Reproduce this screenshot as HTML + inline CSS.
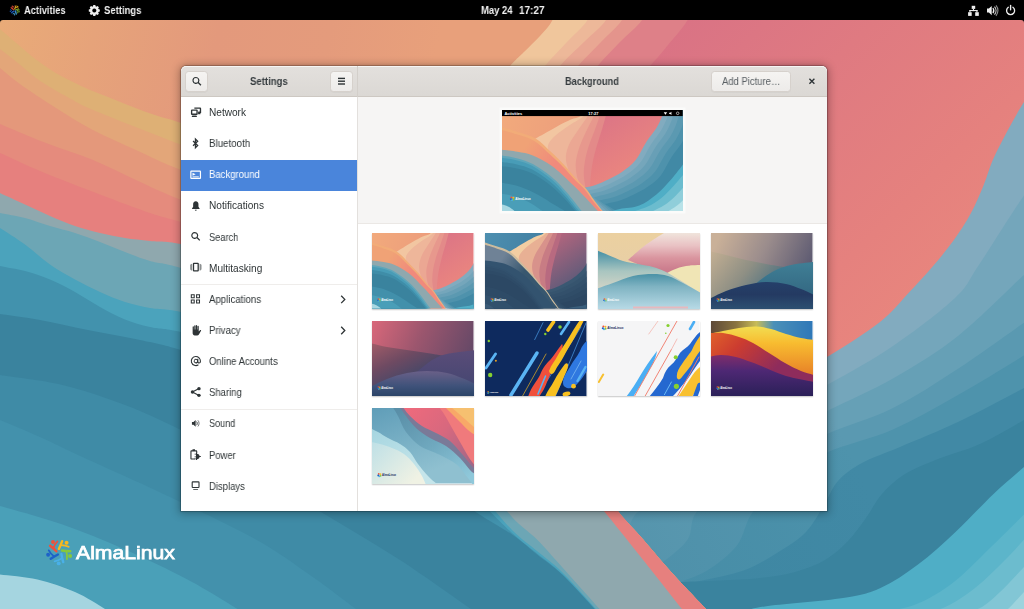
<!DOCTYPE html><html><head><meta charset="utf-8"><title>Settings - Background</title><style>

html,body{margin:0;padding:0;}
body{width:1024px;height:609px;overflow:hidden;position:relative;background:#3a839e;font-family:"Liberation Sans", "DejaVu Sans", sans-serif;}
#wall{position:absolute;left:0;top:0;width:1024px;height:609px;}
.t{position:absolute;white-space:nowrap;transform-origin:0 50%;line-height:normal;display:inline-block;will-change:transform;}
#topbar{position:absolute;left:0;top:0;width:1024px;height:20.2px;background:#000;}
#cornerl,#cornerr{position:absolute;top:20px;width:3px;height:3px;}
#win{position:absolute;left:181px;top:66.3px;width:646px;height:444.8px;border-radius:5px 5px 0 0;background:#fff;
 box-shadow:0 0 0 0.8px rgba(0,0,0,0.22),0 1px 9px 2px rgba(0,0,0,0.27),0 0 3px rgba(0,0,0,0.22);overflow:hidden;}
#hdr{position:absolute;left:0;top:0;width:646px;height:30px;background:linear-gradient(#e3e0dd,#dbd8d4);border-bottom:1px solid #cdc8c2;border-radius:5px 5px 0 0;box-shadow:inset 0 1px rgba(255,255,255,0.7);}
#hsep{position:absolute;left:176px;top:0;width:1px;height:31px;background:#d3cfca;}
.btn{position:absolute;background:linear-gradient(#f5f4f2,#edebe9);border:0.7px solid #d6d1cc;border-radius:3.5px;box-sizing:border-box;box-shadow:0 0.5px 0.5px rgba(0,0,0,0.06);}
#side{position:absolute;left:0;top:31px;width:176px;height:414px;background:#fff;border-right:1px solid #e3e0dd;}
#content{position:absolute;left:177px;top:31px;width:469px;height:414px;background:#fff;}
#prevarea{position:absolute;left:0;top:0;width:469px;height:125.3px;background:#f6f5f4;border-bottom:1px solid #ebe8e5;}
.alma{-webkit-text-stroke:0.75px #fff;}
.sel{position:absolute;left:0;width:176px;background:#4a85db;}
.sep{position:absolute;left:0;width:176px;height:1px;background:#efedeb;}
.thumb{position:absolute;width:101.5px;height:75.5px;overflow:hidden;box-shadow:0 0.5px 1.2px rgba(0,0,0,0.22);}
.thumb svg{display:block;width:101.5px;height:75.5px;}
svg{overflow:hidden}

</style></head><body>
<svg id="wall" viewBox="0 0 1024 609" preserveAspectRatio="none">
<defs>
<linearGradient id="gpink" gradientUnits="userSpaceOnUse" x1="660" y1="20" x2="960" y2="330">
<stop offset="0" stop-color="#D97285"/><stop offset="0.35" stop-color="#DF7A81"/><stop offset="0.7" stop-color="#E5817E"/><stop offset="1" stop-color="#EA887D"/></linearGradient>
<linearGradient id="gor" gradientUnits="userSpaceOnUse" x1="0" y1="20" x2="420" y2="120">
<stop offset="0" stop-color="#E9AB78"/><stop offset="0.22" stop-color="#E6A37A"/><stop offset="0.5" stop-color="#E3997C"/><stop offset="0.75" stop-color="#E49B7C"/><stop offset="1" stop-color="#E8A07B"/></linearGradient>
</defs>
<rect x="0" y="0" width="1024" height="609" fill="url(#gpink)"/>
<path d="M692.0 0.0C691.2 3.3 691.5 12.5 687.5 20.0C683.5 27.5 674.2 37.3 668.0 45.0C661.8 52.7 661.3 53.5 650.0 66.0C638.7 78.5 615.0 101.0 600.0 120.0C585.0 139.0 570.0 156.7 560.0 180.0C550.0 203.3 543.3 246.7 540.0 260.0L0.0 400.0L0.0 0.0Z" fill="#DE8088"/>
<path d="M648.0 0.0C647.0 3.3 646.7 13.0 642.0 20.0C637.3 27.0 627.4 34.3 620.0 42.0C612.6 49.7 607.5 54.7 597.5 66.0C587.5 77.3 572.9 92.7 560.0 110.0C547.1 127.3 530.0 145.0 520.0 170.0C510.0 195.0 503.3 245.0 500.0 260.0L0.0 400.0L0.0 0.0Z" fill="#E4948C"/>
<path d="M628.0 0.0C627.0 3.3 626.5 13.0 622.0 20.0C617.5 27.0 608.3 34.3 601.0 42.0C593.7 49.7 588.2 54.7 578.0 66.0C567.8 77.3 552.2 92.7 540.0 110.0C527.8 127.3 514.2 145.0 505.0 170.0C495.8 195.0 488.3 245.0 485.0 260.0L0.0 400.0L0.0 0.0Z" fill="#E9A793"/>
<path d="M611.0 0.0C610.2 3.3 610.5 13.0 606.0 20.0C601.5 27.0 591.7 34.3 584.0 42.0C576.3 49.7 569.8 54.7 560.0 66.0C550.2 77.3 536.7 92.7 525.0 110.0C513.3 127.3 499.2 145.0 490.0 170.0C480.8 195.0 473.3 245.0 470.0 260.0L0.0 400.0L0.0 0.0Z" fill="#EDB899"/>
<path d="M592.0 0.0C591.2 3.3 591.7 13.0 587.5 20.0C583.3 27.0 574.1 34.3 567.0 42.0C559.9 49.7 554.5 54.7 545.0 66.0C535.5 77.3 522.5 92.7 510.0 110.0C497.5 127.3 480.0 145.0 470.0 170.0C460.0 195.0 453.3 245.0 450.0 260.0L0.0 400.0L0.0 0.0Z" fill="#F0C69C"/>
<path d="M557.0 0.0C556.2 3.3 555.3 14.0 552.5 20.0C549.7 26.0 544.8 30.7 540.0 36.0C535.2 41.3 529.0 47.0 524.0 52.0C519.0 57.0 519.0 56.3 510.0 66.0C501.0 75.7 483.3 92.7 470.0 110.0C456.7 127.3 440.0 145.0 430.0 170.0C420.0 195.0 413.3 245.0 410.0 260.0L0.0 400.0L0.0 0.0Z" fill="url(#gor)"/>
<path d="M1040.0 85.0C1037.3 87.8 1031.3 90.7 1024.0 102.0C1016.7 113.3 1002.8 139.1 996.0 153.0C989.2 166.9 987.7 175.5 983.5 185.5C979.3 195.5 976.0 203.8 971.0 213.0C966.0 222.2 959.8 231.8 953.5 240.5C947.2 249.2 941.0 256.8 933.5 265.5C926.0 274.2 917.4 283.6 908.5 293.0C899.6 302.4 893.6 311.3 880.0 322.0C866.4 332.7 847.0 344.8 827.0 357.0C807.0 369.2 782.8 381.2 760.0 395.0C737.2 408.8 711.7 425.0 690.0 440.0C668.3 455.0 643.3 473.3 630.0 485.0C616.7 496.7 613.3 505.8 610.0 510.0L706.0 609.0L1040.0 609.0Z" fill="#82ABBF"/>
<path d="M1040.0 180.0C1037.3 182.6 1034.2 181.2 1024.0 195.5C1013.8 209.8 990.0 248.4 978.5 265.5C967.0 282.6 969.2 284.6 955.0 298.0C940.8 311.4 914.3 331.5 893.0 346.0C871.7 360.5 852.5 370.7 827.0 385.0C801.5 399.3 766.2 416.5 740.0 432.0C713.8 447.5 689.2 465.8 670.0 478.0C650.8 490.2 635.8 498.0 625.0 505.0C614.2 512.0 608.3 517.5 605.0 520.0L600.0 640.0L1040.0 640.0Z" fill="#74A6BB"/>
<path d="M1040.0 262.0C1037.3 264.2 1037.7 262.7 1024.0 275.0C1010.3 287.3 979.8 318.8 958.0 336.0C936.2 353.2 914.8 366.0 893.0 378.5C871.2 391.0 849.2 399.9 827.0 411.0C804.8 422.1 781.2 433.5 760.0 445.0C738.8 456.5 716.7 470.5 700.0 480.0C683.3 489.5 670.3 496.7 660.0 502.0C649.7 507.3 643.2 507.8 638.0 512.0C632.8 516.2 631.3 521.5 629.0 527.0C626.7 532.5 624.8 542.0 624.0 545.0L600.0 640.0L1040.0 640.0Z" fill="#66A0B6"/>
<path d="M1040.0 312.0C1037.3 313.8 1037.7 313.2 1024.0 322.7C1010.3 332.1 979.8 354.5 958.0 368.7C936.2 382.9 914.8 397.1 893.0 408.0C871.2 418.9 846.7 425.0 827.0 434.0C807.3 443.0 791.2 452.7 775.0 462.0C758.8 471.3 743.1 481.7 730.0 490.0C716.9 498.3 703.6 503.8 696.6 512.0C689.6 520.2 692.9 531.2 688.0 539.0C683.1 546.8 673.7 553.5 667.0 559.0C660.3 564.5 651.2 569.8 648.0 572.0L600.0 640.0L1040.0 640.0Z" fill="#5A99B1"/>
<path d="M1040.0 345.0C1037.3 346.8 1037.7 347.2 1024.0 355.5C1010.3 363.8 979.8 382.7 958.0 395.0C936.2 407.3 914.8 419.8 893.0 429.4C871.2 439.0 845.0 444.3 827.0 452.4C809.0 460.5 797.4 468.1 785.0 478.0C772.6 487.9 760.7 500.8 752.7 512.0C744.7 523.2 744.5 535.7 737.0 545.4C729.5 555.1 717.0 564.1 708.0 570.0C699.0 575.9 689.3 578.3 683.0 581.0C676.7 583.7 672.2 585.2 670.0 586.0L600.0 640.0L1040.0 640.0Z" fill="#4E93AC"/>
<path d="M1040.0 378.0C1037.3 379.7 1037.7 380.7 1024.0 388.0C1010.3 395.3 978.7 412.2 958.0 422.0C937.3 431.8 916.0 440.2 900.0 447.0C884.0 453.8 872.3 457.3 862.0 463.0C851.7 468.7 844.3 474.0 838.0 481.0C831.7 488.0 829.3 496.5 824.0 505.0C818.7 513.5 813.3 524.3 806.0 532.0C798.7 539.7 790.2 544.7 780.0 551.0C769.8 557.3 758.3 565.0 745.0 570.0C731.7 575.0 710.8 578.8 700.0 581.0C689.2 583.2 683.3 582.7 680.0 583.0L600.0 640.0L1040.0 640.0Z" fill="#4189A5"/>
<path d="M1040.0 410.0C1037.3 411.7 1034.0 414.3 1024.0 420.0C1014.0 425.7 994.3 437.5 980.0 444.0C965.7 450.5 950.5 454.0 938.0 459.0C925.5 464.0 914.3 468.2 905.0 474.0C895.7 479.8 888.5 486.7 882.0 494.0C875.5 501.3 871.7 510.2 866.0 518.0C860.3 525.8 854.8 534.0 848.0 541.0C841.2 548.0 833.8 554.8 825.0 560.0C816.2 565.2 805.8 569.0 795.0 572.0C784.2 575.0 772.5 576.6 760.0 578.0C747.5 579.4 733.3 579.8 720.0 580.5C706.7 581.2 686.7 581.8 680.0 582.0L600.0 640.0L1040.0 640.0Z" fill="#3A839E"/>
<linearGradient id="gdk" gradientUnits="userSpaceOnUse" x1="620" y1="565" x2="850" y2="450"><stop offset="0" stop-color="#3A839E" stop-opacity="0.42"/><stop offset="0.6" stop-color="#3A839E" stop-opacity="0.22"/><stop offset="1" stop-color="#3A839E" stop-opacity="0"/></linearGradient>
<path d="M1040.0 85.0C1037.3 87.8 1031.3 90.7 1024.0 102.0C1016.7 113.3 1002.8 139.1 996.0 153.0C989.2 166.9 987.7 175.5 983.5 185.5C979.3 195.5 976.0 203.8 971.0 213.0C966.0 222.2 959.8 231.8 953.5 240.5C947.2 249.2 941.0 256.8 933.5 265.5C926.0 274.2 917.4 283.6 908.5 293.0C899.6 302.4 893.6 311.3 880.0 322.0C866.4 332.7 847.0 344.8 827.0 357.0C807.0 369.2 782.8 381.2 760.0 395.0C737.2 408.8 711.7 425.0 690.0 440.0C668.3 455.0 643.3 473.3 630.0 485.0C616.7 496.7 613.3 505.8 610.0 510.0L706.0 609.0L1040.0 609.0Z" fill="url(#gdk)"/>
<path d="M740.0 612.0C744.7 611.0 750.8 608.3 768.0 606.0C785.2 603.7 824.2 601.0 843.0 598.0C861.8 595.0 868.0 593.6 880.5 588.0C893.0 582.4 905.5 573.8 918.0 564.5C930.5 555.2 943.0 543.7 955.5 532.0C968.0 520.3 981.6 505.3 993.0 494.5C1004.4 483.7 1016.2 474.1 1024.0 467.0C1031.8 459.9 1037.3 454.5 1040.0 452.0L1040.0 614.0Z" fill="#4FAEC6"/>
<path d="M860.0 612.0C868.0 611.2 893.0 611.5 908.0 607.0C923.0 602.5 936.3 594.8 950.0 585.0C963.7 575.2 977.7 559.8 990.0 548.0C1002.3 536.2 1015.7 522.8 1024.0 514.5C1032.3 506.2 1037.3 500.8 1040.0 498.0L1040.0 614.0Z" fill="#5CB5CA"/>
<path d="M915.0 612.0C919.7 611.3 933.0 612.0 943.0 608.0C953.0 604.0 964.7 596.0 975.0 588.0C985.3 580.0 996.8 568.1 1005.0 560.0C1013.2 551.9 1018.2 545.8 1024.0 539.5C1029.8 533.2 1037.3 524.9 1040.0 522.0L1040.0 614.0Z" fill="#6CBCCE"/>
<path d="M960.0 612.0C963.3 611.3 973.3 611.3 980.0 608.0C986.7 604.7 992.7 598.8 1000.0 592.0C1007.3 585.2 1017.3 574.0 1024.0 567.0C1030.7 560.0 1037.3 552.8 1040.0 550.0L1040.0 614.0Z" fill="#82C6D5"/>
<path d="M1000.0 613.0C1001.3 612.3 1004.0 612.5 1008.0 609.0C1012.0 605.5 1018.7 597.7 1024.0 592.0C1029.3 586.3 1037.3 577.8 1040.0 575.0L1040.0 614.0Z" fill="#9DD3DD"/>
<path d="M-10.0 20.0C-8.3 21.5 -4.7 24.9 0.0 29.0C4.7 33.1 12.0 39.4 18.0 44.5C24.0 49.6 30.0 54.9 36.0 59.5C42.0 64.1 48.0 68.3 54.0 72.0C60.0 75.7 66.0 78.5 72.0 81.5C78.0 84.5 84.0 87.4 90.0 90.0C96.0 92.6 101.9 94.6 108.0 97.0C114.1 99.4 120.4 102.1 126.5 104.5C132.6 106.9 138.5 109.3 144.5 111.5C150.5 113.7 156.4 115.6 162.5 117.5C168.6 119.4 164.8 117.2 181.0 123.0C197.2 128.8 230.2 136.7 260.0 152.0C289.8 167.3 328.3 192.0 360.0 215.0C391.7 238.0 421.7 262.5 450.0 290.0C478.3 317.5 506.7 350.8 530.0 380.0C553.3 409.2 575.5 443.3 590.0 465.0C604.5 486.7 608.7 498.2 617.0 510.0C625.3 521.8 630.8 525.5 640.0 536.0C649.2 546.5 661.0 560.8 672.0 573.0C683.0 585.2 699.3 601.8 706.0 609.0C712.7 616.2 711.0 614.8 712.0 616.0L-10.0 618.0Z" fill="#DEB075"/>
<path d="M-10.0 40.0C-8.3 41.5 -4.7 45.2 0.0 49.0C4.7 52.8 12.0 58.2 18.0 63.0C24.0 67.8 30.0 73.6 36.0 78.0C42.0 82.4 48.0 85.9 54.0 89.5C60.0 93.1 66.8 96.7 72.0 99.5C77.2 102.3 79.0 103.8 85.0 106.5C91.0 109.2 101.1 113.2 108.0 116.0C114.9 118.8 120.4 121.1 126.5 123.5C132.6 125.9 138.5 128.2 144.5 130.5C150.5 132.8 156.4 135.2 162.5 137.5C168.6 139.8 164.8 138.8 181.0 144.5C197.2 150.2 230.2 158.1 260.0 172.0C289.8 185.9 328.3 206.7 360.0 228.0C391.7 249.3 421.7 273.3 450.0 300.0C478.3 326.7 506.7 360.0 530.0 388.0C553.3 416.0 575.5 447.7 590.0 468.0C604.5 488.3 608.7 498.7 617.0 510.0C625.3 521.3 630.8 525.5 640.0 536.0C649.2 546.5 661.0 560.8 672.0 573.0C683.0 585.2 699.3 601.8 706.0 609.0C712.7 616.2 711.0 614.8 712.0 616.0L-10.0 618.0Z" fill="#E3A679"/>
<path d="M-10.0 60.0C-8.3 61.3 -5.0 64.0 0.0 68.0C5.0 72.0 10.7 77.3 20.0 84.0C29.3 90.7 44.0 100.4 56.0 108.0C68.0 115.6 78.7 122.5 92.0 129.5C105.3 136.5 121.2 143.2 136.0 150.0C150.8 156.8 160.3 162.0 181.0 170.0C201.7 178.0 230.2 185.3 260.0 198.0C289.8 210.7 328.3 226.7 360.0 246.0C391.7 265.3 421.7 288.8 450.0 314.0C478.3 339.2 506.7 371.0 530.0 397.0C553.3 423.0 575.5 451.2 590.0 470.0C604.5 488.8 608.7 499.0 617.0 510.0C625.3 521.0 630.8 525.5 640.0 536.0C649.2 546.5 661.0 560.8 672.0 573.0C683.0 585.2 699.3 601.8 706.0 609.0C712.7 616.2 711.0 614.8 712.0 616.0L-10.0 618.0Z" fill="#E4987B"/>
<path d="M-10.0 120.0C-8.3 120.7 -9.3 120.2 0.0 124.0C9.3 127.8 30.7 137.1 46.0 143.0C61.3 148.9 77.0 153.3 92.0 159.5C107.0 165.7 121.2 173.3 136.0 180.0C150.8 186.7 160.3 192.0 181.0 199.7C201.7 207.4 230.2 214.3 260.0 226.0C289.8 237.7 328.3 252.5 360.0 270.0C391.7 287.5 421.7 308.3 450.0 331.0C478.3 353.7 506.7 382.3 530.0 406.0C553.3 429.7 575.5 455.7 590.0 473.0C604.5 490.3 608.7 499.5 617.0 510.0C625.3 520.5 630.8 525.5 640.0 536.0C649.2 546.5 661.0 560.8 672.0 573.0C683.0 585.2 699.3 601.8 706.0 609.0C712.7 616.2 711.0 614.8 712.0 616.0L-10.0 618.0Z" fill="#E58B7D"/>
<path d="M-10.0 149.0C-8.3 149.7 -8.8 149.2 0.0 153.0C8.8 156.8 25.8 165.1 42.5 172.0C59.2 178.9 82.1 187.7 100.0 194.5C117.9 201.3 136.5 208.4 150.0 213.0C163.5 217.6 162.7 216.7 181.0 222.0C199.3 227.3 230.2 234.5 260.0 245.0C289.8 255.5 328.3 268.8 360.0 285.0C391.7 301.2 421.7 320.8 450.0 342.0C478.3 363.2 506.7 389.8 530.0 412.0C553.3 434.2 575.5 458.7 590.0 475.0C604.5 491.3 608.7 499.8 617.0 510.0C625.3 520.2 630.8 525.5 640.0 536.0C649.2 546.5 661.0 560.8 672.0 573.0C683.0 585.2 699.3 601.8 706.0 609.0C712.7 616.2 711.0 614.8 712.0 616.0L-10.0 618.0Z" fill="#E6807E"/>
<path d="M-10.0 188.0C-8.3 188.8 -5.8 190.2 0.0 193.0C5.8 195.8 16.7 200.7 25.0 204.5C33.3 208.3 41.7 212.4 50.0 216.0C58.3 219.6 66.7 223.2 75.0 226.0C83.3 228.8 91.7 231.0 100.0 233.0C108.3 235.0 116.7 236.7 125.0 238.0C133.3 239.3 140.7 240.0 150.0 241.0C159.3 242.0 162.7 240.5 181.0 244.0C199.3 247.5 230.2 252.7 260.0 262.0C289.8 271.3 328.3 284.5 360.0 300.0C391.7 315.5 421.7 334.2 450.0 355.0C478.3 375.8 508.3 403.3 530.0 425.0C551.7 446.7 567.8 470.8 580.0 485.0C592.2 499.2 593.0 498.2 603.0 510.0C613.0 521.8 626.8 539.5 640.0 556.0C653.2 572.5 673.7 598.7 682.0 609.0C690.3 619.3 688.7 616.5 690.0 618.0L-10.0 618.0Z" fill="#8FA8AE"/>
<path d="M-10.0 210.0C-8.3 210.5 -5.8 211.7 0.0 213.0C5.8 214.3 16.7 215.8 25.0 218.0C33.3 220.2 41.7 223.5 50.0 226.0C58.3 228.5 66.7 230.3 75.0 233.0C83.3 235.7 91.7 238.8 100.0 242.0C108.3 245.2 116.7 248.8 125.0 252.0C133.3 255.2 140.7 258.3 150.0 261.0C159.3 263.7 162.7 262.3 181.0 268.0C199.3 273.7 233.5 283.8 260.0 295.0C286.5 306.2 313.3 317.2 340.0 335.0C366.7 352.8 396.7 378.5 420.0 402.0C443.3 425.5 464.7 456.8 480.0 476.0C495.3 495.2 502.5 506.4 512.0 517.0C521.5 527.6 528.7 531.2 537.0 539.5C545.3 547.8 551.6 555.4 562.0 567.0C572.4 578.6 592.2 600.5 599.5 609.0C606.8 617.5 604.9 616.5 606.0 618.0L-10.0 618.0Z" fill="#6CA6B5"/>
<path d="M-10.0 222.0C-8.3 223.0 -5.8 224.2 0.0 228.0C5.8 231.8 16.7 238.4 25.0 244.5C33.3 250.6 41.7 258.7 50.0 264.5C58.3 270.3 66.7 274.9 75.0 279.5C83.3 284.1 91.7 288.2 100.0 292.0C108.3 295.8 116.7 299.3 125.0 302.0C133.3 304.7 140.7 306.3 150.0 308.0C159.3 309.7 162.7 308.0 181.0 312.0C199.3 316.0 233.5 322.3 260.0 332.0C286.5 341.7 313.3 353.3 340.0 370.0C366.7 386.7 396.7 411.3 420.0 432.0C443.3 452.7 464.7 477.7 480.0 494.0C495.3 510.3 502.5 520.5 512.0 530.0C521.5 539.5 528.7 544.0 537.0 551.0C545.3 558.0 552.2 562.3 562.0 572.0C571.8 581.7 589.3 601.3 596.0 609.0C602.7 616.7 601.0 616.5 602.0 618.0L-10.0 618.0Z" fill="#4BA3BC"/>
<path d="M-10.0 262.0C-8.3 262.7 -5.8 264.5 0.0 266.0C5.8 267.5 16.7 268.8 25.0 271.0C33.3 273.2 41.7 276.0 50.0 279.5C58.3 283.0 66.7 287.4 75.0 292.0C83.3 296.6 91.7 302.4 100.0 307.0C108.3 311.6 116.7 316.2 125.0 319.5C133.3 322.8 140.7 324.9 150.0 327.0C159.3 329.1 162.7 327.8 181.0 332.0C199.3 336.2 233.5 342.3 260.0 352.0C286.5 361.7 313.3 374.2 340.0 390.0C366.7 405.8 396.7 428.3 420.0 447.0C443.3 465.7 464.7 487.7 480.0 502.0C495.3 516.3 502.5 524.4 512.0 533.0C521.5 541.6 528.7 546.7 537.0 553.5C545.3 560.3 552.3 564.8 562.0 574.0C571.7 583.2 588.5 601.7 595.0 609.0C601.5 616.3 600.0 616.5 601.0 618.0L-10.0 618.0Z" fill="#4292AD"/>
<path d="M-10.0 313.0C-8.3 313.2 -8.3 312.8 0.0 314.0C8.3 315.2 25.3 317.3 40.0 320.0C54.7 322.7 71.3 326.7 88.0 330.0C104.7 333.3 124.5 336.7 140.0 340.0C155.5 343.3 161.0 344.0 181.0 350.0C201.0 356.0 233.5 365.7 260.0 376.0C286.5 386.3 313.3 396.7 340.0 412.0C366.7 427.3 398.3 452.0 420.0 468.0C441.7 484.0 454.7 496.9 470.0 508.0C485.3 519.1 500.8 526.8 512.0 534.5C523.2 542.2 528.7 547.8 537.0 554.5C545.3 561.2 552.4 565.4 562.0 574.5C571.6 583.6 588.2 601.8 594.5 609.0C600.8 616.2 599.1 616.5 600.0 618.0L-10.0 618.0Z" fill="#3A839E"/>
<path d="M-10.0 373.0C-8.3 373.3 -12.1 373.0 0.0 375.0C12.1 377.0 41.7 380.0 62.5 385.0C83.3 390.0 105.2 397.5 125.0 405.0C144.8 412.5 161.8 420.5 181.0 430.0C200.2 439.5 216.7 448.3 240.0 462.0C263.3 475.7 294.3 495.7 321.0 512.0C347.7 528.3 375.0 543.8 400.0 560.0C425.0 576.2 456.8 599.3 471.0 609.0C485.2 618.7 482.7 616.5 485.0 618.0L-10.0 618.0Z" fill="#3F8BA6"/>
<path d="M-10.0 416.0C-8.3 416.7 -8.3 416.5 0.0 420.0C8.3 423.5 26.2 430.8 40.0 437.0C53.8 443.2 60.8 447.0 82.5 457.0C104.2 467.0 141.1 483.2 170.0 497.0C198.9 510.8 232.7 526.5 256.0 539.5C279.3 552.5 293.3 563.4 310.0 575.0C326.7 586.6 346.3 601.8 356.0 609.0C365.7 616.2 366.0 616.5 368.0 618.0L-10.0 618.0Z" fill="#4391AC"/>
<path d="M-10.0 503.0C-8.3 503.5 -12.1 502.4 0.0 506.0C12.1 509.6 41.7 517.2 62.5 524.5C83.3 531.8 104.2 540.3 125.0 549.5C145.8 558.7 168.8 569.6 187.5 579.5C206.2 589.4 227.1 602.6 237.5 609.0C247.9 615.4 247.9 616.5 250.0 618.0L-10.0 618.0Z" fill="#4AA0B8"/>
<path d="M-10.0 573.0C-8.3 573.2 -7.9 573.4 0.0 574.5C7.9 575.6 25.0 576.6 37.5 579.5C50.0 582.4 63.8 587.1 75.0 592.0C86.2 596.9 98.3 604.7 105.0 609.0C111.7 613.3 113.3 616.5 115.0 618.0L-10.0 618.0Z" fill="#A5D5E0"/>
</svg>
<svg style="position:absolute;left:44px;top:537px;width:30px;height:30px" viewBox="44 537 30 30"><path d="M50.07 545.81Q53.67 548.55 56.35 551.28" stroke="#F0503C" stroke-width="2.40" stroke-linecap="round" fill="none"/><path d="M53.50 547.89Q54.80 544.01 57.46 541.36" stroke="#F0503C" stroke-width="1.80" stroke-linecap="round" fill="none"/><circle cx="52.98" cy="542.07" r="1.95" fill="#F0503C"/><path d="M62.15 541.17Q60.65 545.44 58.88 548.83" stroke="#F8B820" stroke-width="2.40" stroke-linecap="round" fill="none"/><path d="M61.23 545.07Q65.32 545.11 68.66 546.82" stroke="#F8B820" stroke-width="1.80" stroke-linecap="round" fill="none"/><circle cx="66.60" cy="542.79" r="1.95" fill="#F8B820"/><path d="M70.28 551.22Q65.76 551.12 62.00 550.48" stroke="#86C83C" stroke-width="2.40" stroke-linecap="round" fill="none"/><path d="M66.30 551.56Q67.52 555.46 66.93 559.16" stroke="#86C83C" stroke-width="1.80" stroke-linecap="round" fill="none"/><circle cx="70.13" cy="555.96" r="1.95" fill="#86C83C"/><path d="M63.24 562.07Q61.94 557.74 61.38 553.96" stroke="#4AB0E8" stroke-width="2.40" stroke-linecap="round" fill="none"/><path d="M61.69 558.38Q58.36 560.75 54.65 561.33" stroke="#4AB0E8" stroke-width="1.80" stroke-linecap="round" fill="none"/><circle cx="58.69" cy="563.38" r="1.95" fill="#4AB0E8"/><path d="M50.75 558.72Q54.47 556.15 57.89 554.45" stroke="#1D62C8" stroke-width="2.40" stroke-linecap="round" fill="none"/><path d="M53.78 556.11Q50.50 553.67 48.80 550.32" stroke="#1D62C8" stroke-width="1.80" stroke-linecap="round" fill="none"/><circle cx="48.10" cy="554.80" r="1.95" fill="#1D62C8"/></svg>
<span class="t alma" style="left:75.80px;top:541.70px;font-size:19.0px;font-weight:normal;color:#ffffff;transform:scaleX(1.1148)">AlmaLinux</span>
<div id="topbar"></div>
<svg id="cornerl" style="left:0" viewBox="0 0 7 7"><path d="M0 0H7A7 7 0 0 0 0 7Z" fill="#000"/></svg>
<svg id="cornerr" style="left:1021px" viewBox="0 0 7 7"><path d="M7 0H0A7 7 0 0 1 7 7Z" fill="#000"/></svg>
<svg style="position:absolute;left:0;top:0;width:1024px;height:20px" viewBox="0 0 1024 20"><g opacity="0.85"><path d="M11.19 7.75Q12.60 8.83 13.64 9.90" stroke="#F0503C" stroke-width="1.27" stroke-linecap="round" fill="none"/><path d="M12.53 8.57Q13.04 7.05 14.08 6.01" stroke="#F0503C" stroke-width="0.95" stroke-linecap="round" fill="none"/><circle cx="12.33" cy="6.29" r="0.76" fill="#F0503C"/><path d="M15.92 5.94Q15.33 7.61 14.64 8.94" stroke="#F8B820" stroke-width="1.27" stroke-linecap="round" fill="none"/><path d="M15.56 7.46Q17.16 7.48 18.47 8.15" stroke="#F8B820" stroke-width="0.95" stroke-linecap="round" fill="none"/><circle cx="17.66" cy="6.57" r="0.76" fill="#F8B820"/><path d="M19.10 9.87Q17.33 9.83 15.86 9.58" stroke="#86C83C" stroke-width="1.27" stroke-linecap="round" fill="none"/><path d="M17.54 10.00Q18.02 11.53 17.79 12.98" stroke="#86C83C" stroke-width="0.95" stroke-linecap="round" fill="none"/><circle cx="19.04" cy="11.73" r="0.76" fill="#86C83C"/><path d="M16.34 14.12Q15.84 12.43 15.62 10.95" stroke="#4AB0E8" stroke-width="1.27" stroke-linecap="round" fill="none"/><path d="M15.74 12.68Q14.43 13.61 12.98 13.83" stroke="#4AB0E8" stroke-width="0.95" stroke-linecap="round" fill="none"/><circle cx="14.56" cy="14.64" r="0.76" fill="#4AB0E8"/><path d="M11.45 12.81Q12.91 11.80 14.25 11.14" stroke="#1D62C8" stroke-width="1.27" stroke-linecap="round" fill="none"/><path d="M12.64 11.79Q11.35 10.83 10.69 9.52" stroke="#1D62C8" stroke-width="0.95" stroke-linecap="round" fill="none"/><circle cx="10.41" cy="11.28" r="0.76" fill="#1D62C8"/></g><path d="M92.80 6.52L93.35 4.98L95.25 4.98L95.80 6.52L96.05 6.63L97.53 5.93L98.87 7.27L98.17 8.75L98.28 9.00L99.82 9.55L99.82 11.45L98.28 12.00L98.17 12.25L98.87 13.73L97.53 15.07L96.05 14.37L95.80 14.48L95.25 16.02L93.35 16.02L92.80 14.48L92.55 14.37L91.07 15.07L89.73 13.73L90.43 12.25L90.32 12.00L88.78 11.45L88.78 9.55L90.32 9.00L90.43 8.75L89.73 7.27L91.07 5.93L92.55 6.63ZM94.30 8.45a2.050 2.050 0 1 0 0.010 0Z" fill="#eeeeee" fill-rule="evenodd"/><g fill="#eeeeee"><rect x="971.700" y="5.800" width="3.500" height="3.100"/><rect x="968.100" y="12.200" width="3.600" height="3.700"/><rect x="975.200" y="12.200" width="3.600" height="3.700"/><rect x="972.900" y="8.800" width="1.100" height="2.300"/><rect x="969.400" y="10.000" width="8.100" height="1.100"/><rect x="969.400" y="10.000" width="1.100" height="2.300"/><rect x="976.400" y="10.000" width="1.100" height="2.300"/></g><path d="M987 8.600h1.900l2.800-2.700v9.400l-2.800-2.700H987Z" fill="#eeeeee"/><path d="M992.900 8.000c1.100 1.500 1.100 3.700 0 5.200" stroke="#eeeeee" stroke-width="1.200" fill="none"/><path d="M994.500 6.600c2 2.300 2 5.700 0 8" stroke="#eeeeee" stroke-width="1.200" fill="none" opacity="0.850"/><path d="M996.000 5.400c2.600 3 2.600 7.400 0 10.400" stroke="#eeeeee" stroke-width="1.100" fill="none" opacity="0.600"/><path d="M1008.300 7.300a4.000 4.000 0 1 0 4.600 0" stroke="#eeeeee" stroke-width="1.350" fill="none" stroke-linecap="round"/><path d="M1010.600 5.500v4.300" stroke="#eeeeee" stroke-width="1.350" fill="none" stroke-linecap="round"/></svg>
<span class="t " style="left:23.60px;top:3.86px;font-size:11.2px;font-weight:bold;color:#f0f0f0;transform:scaleX(0.8362)">Activities</span>
<span class="t " style="left:103.60px;top:3.86px;font-size:11.2px;font-weight:bold;color:#f0f0f0;transform:scaleX(0.8473)">Settings</span>
<span class="t " style="left:481.20px;top:3.86px;font-size:11.2px;font-weight:bold;color:#f0f0f0;transform:scaleX(0.8465)">May 24</span>
<span class="t " style="left:518.80px;top:3.86px;font-size:11.2px;font-weight:bold;color:#f0f0f0;transform:scaleX(0.8873)">17:27</span>
<div id="win">
<div id="hdr"></div><div id="hsep"></div>
<div class="btn" style="left:4.4px;top:4.7px;width:22.8px;height:21.2px"></div>
<div class="btn" style="left:149.4px;top:4.7px;width:22.2px;height:21.2px"></div>
<div class="btn" style="left:530.3px;top:4.7px;width:80px;height:21px"></div>
<svg style="position:absolute;left:0;top:0;width:646px;height:31px" viewBox="0 0 646 31"><g transform="translate(15.90 15.40) scale(0.620) translate(-8 -8)" fill="#2e3436" stroke="none"><path d="M6.400 0.800a5.600 5.600 0 1 0 3.300 10.100l4.100 4.100 1.500-1.500-4.100-4.100A5.600 5.600 0 0 0 6.400 0.800Zm0 1.800a3.800 3.800 0 1 1 0 7.600 3.800 3.800 0 0 1 0-7.600Z" fill-rule="evenodd"/></g><rect x="157.00" y="11.70" width="7" height="1.400" fill="#2e3436"/><rect x="157.00" y="14.50" width="7" height="1.400" fill="#2e3436"/><rect x="157.00" y="17.30" width="7" height="1.400" fill="#2e3436"/><path d="M628.40 12.70l5.000 5.000m0-5.000l-5.000 5.000" stroke="#2e3436" stroke-width="1.350" fill="none"/></svg>
<span class="t " style="left:69.20px;top:9.57px;font-size:10.2px;font-weight:bold;color:#363c3f;transform:scaleX(0.9402)">Settings</span>
<span class="t " style="left:383.90px;top:9.57px;font-size:10.2px;font-weight:bold;color:#363c3f;transform:scaleX(0.9052)">Background</span>
<span class="t " style="left:540.80px;top:9.56px;font-size:10.1px;font-weight:normal;color:#5a6064;transform:scaleX(0.9377)">Add Picture…</span>
<div id="side">
<div class="sel" style="top:62.7px;height:31.1px"></div>
<div class="sep" style="top:187.1px"></div>
<div class="sep" style="top:311.7px"></div>
<span class="t " style="left:28.10px;top:9.66px;font-size:10.1px;font-weight:normal;color:#2e3436;transform:scaleX(0.9884)">Network</span>
<span class="t " style="left:28.10px;top:40.81px;font-size:10.1px;font-weight:normal;color:#2e3436;transform:scaleX(0.9659)">Bluetooth</span>
<span class="t " style="left:28.10px;top:71.96px;font-size:10.1px;font-weight:normal;color:#ffffff;transform:scaleX(0.9429)">Background</span>
<span class="t " style="left:28.10px;top:103.11px;font-size:10.1px;font-weight:normal;color:#2e3436;transform:scaleX(1.0003)">Notifications</span>
<span class="t " style="left:28.10px;top:134.26px;font-size:10.1px;font-weight:normal;color:#2e3436;transform:scaleX(0.9192)">Search</span>
<span class="t " style="left:28.10px;top:165.41px;font-size:10.1px;font-weight:normal;color:#2e3436;transform:scaleX(0.9944)">Multitasking</span>
<span class="t " style="left:28.10px;top:196.56px;font-size:10.1px;font-weight:normal;color:#2e3436;transform:scaleX(0.9552)">Applications</span>
<span class="t " style="left:28.10px;top:227.71px;font-size:10.1px;font-weight:normal;color:#2e3436;transform:scaleX(0.9518)">Privacy</span>
<span class="t " style="left:28.10px;top:258.86px;font-size:10.1px;font-weight:normal;color:#2e3436;transform:scaleX(0.9403)">Online Accounts</span>
<span class="t " style="left:28.10px;top:290.01px;font-size:10.1px;font-weight:normal;color:#2e3436;transform:scaleX(0.9426)">Sharing</span>
<span class="t " style="left:28.10px;top:321.16px;font-size:10.1px;font-weight:normal;color:#2e3436;transform:scaleX(0.9011)">Sound</span>
<span class="t " style="left:28.10px;top:352.31px;font-size:10.1px;font-weight:normal;color:#2e3436;transform:scaleX(0.9328)">Power</span>
<span class="t " style="left:28.10px;top:383.46px;font-size:10.1px;font-weight:normal;color:#2e3436;transform:scaleX(0.9409)">Displays</span>
<svg style="position:absolute;left:0;top:0;width:176px;height:413px" viewBox="0 0 176 413"><g transform="translate(14.70 15.20) scale(0.680) translate(-8 -8)" fill="#2e3436" stroke="none"><path d="M1 5.5A1.5 1.5 0 0 1 2.5 4h7A1.5 1.5 0 0 1 11 5.5v5A1.5 1.5 0 0 1 9.500 12H2.500A1.500 1.500 0 0 1 1 10.500ZM3 6v4h6V6Z" fill-rule="evenodd"/><path d="M3 13h6l1 2H2Z"/><path d="M6 1h8.500A1.500 1.500 0 0 1 16 2.500V9h-2V3H6Z"/><rect x="11.500" y="7" width="3.500" height="4" rx="0.800"/></g><g transform="translate(14.50 46.40) scale(0.660) translate(-8 -8)" fill="#2e3436" stroke="none"><path d="M4.300 4.400 11.300 11.200 7.900 14.600V1.400L11.300 4.800 4.300 11.600" stroke="#2e3436" stroke-width="1.900" fill="none" stroke-linejoin="miter"/></g><g transform="translate(14.65 77.80) scale(0.700) translate(-8 -8)" fill="#ffffff" stroke="none"><path d="M0.300 3.500A1.500 1.500 0 0 1 1.800 2h12.400A1.500 1.500 0 0 1 15.700 3.500v9A1.500 1.500 0 0 1 14.200 14H1.800A1.500 1.500 0 0 1 0.300 12.500ZM2 3.700v8.600h12V3.700Z" fill-rule="evenodd"/><path d="M3.500 5 8 7.300 3.500 9.500Z"/><rect x="3.500" y="10.300" width="9" height="1.300"/></g><g transform="translate(14.80 109.10) scale(0.700) translate(-8 -8)" fill="#2e3436" stroke="none"><path d="M8 1.200C5.400 1.200 4.200 3.200 4.200 5.500V9L2.600 11.300V12.300H13.400V11.300L11.800 9V5.500C11.800 3.200 10.600 1.200 8 1.200Z"/><path d="M6.600 13.200h2.800a1.400 1.400 0 0 1-2.800 0Z"/></g><g transform="translate(14.70 139.50) scale(0.620) translate(-8 -8)" fill="#2e3436" stroke="none"><path d="M6.400 0.800a5.600 5.600 0 1 0 3.300 10.100l4.100 4.100 1.500-1.500-4.100-4.100A5.600 5.600 0 0 0 6.400 0.800Zm0 1.800a3.800 3.800 0 1 1 0 7.600 3.800 3.800 0 0 1 0-7.600Z" fill-rule="evenodd"/></g><g transform="translate(14.85 170.20) scale(0.710) translate(-8 -8)" fill="#2e3436" stroke="none"><path d="M3.800 3.200A1.400 1.400 0 0 1 5.200 1.800h5.600a1.400 1.400 0 0 1 1.400 1.400v9.600a1.400 1.400 0 0 1-1.400 1.400H5.200a1.400 1.400 0 0 1-1.400-1.400ZM5.600 3.600v8.800h4.800V3.600Z" fill-rule="evenodd"/><path d="M2.800 3.200v9.600C1 12.600 0 11.800 0 10.500v-5C0 4.200 1 3.400 2.800 3.200Z" opacity="0.550"/><path d="M13.200 3.200v9.600c1.800-0.200 2.800-1 2.800-2.300v-5c0-1.300-1-2.100-2.800-2.300Z" opacity="0.550"/></g><g transform="translate(14.40 201.90) scale(0.660) translate(-8 -8)" fill="#2e3436" stroke="none"><path d="M1 1h6v6h-6Zm1.600 1.600v2.800h2.800v-2.800Z" fill-rule="evenodd"/><path d="M9 1h6v6h-6Zm1.600 1.600v2.800h2.800v-2.800Z" fill-rule="evenodd"/><path d="M1 9h6v6h-6Zm1.600 1.600v2.800h2.800v-2.800Z" fill-rule="evenodd"/><path d="M9 9h6v6h-6Zm1.600 1.600v2.800h2.800v-2.800Z" fill-rule="evenodd"/></g><g transform="translate(15.00 233.20) scale(0.700) translate(-8 -8)" fill="#2e3436" stroke="none"><path d="M3.200 3.400a.9.900 0 0 1 1.800 0V7h.500V1.900a.9.900 0 0 1 1.800 0V7h.500V1.400a.9.900 0 0 1 1.800 0V7h.500V2.700a.9.900 0 0 1 1.800 0V9.800l2.100-2c.7-.6 1.700.2 1.200 1l-3 5.200c-.6 1-1.500 1.500-2.700 1.500H6.300c-1.800 0-3.100-1.300-3.100-3.100Z"/></g><g transform="translate(14.85 264.00) scale(0.680) translate(-8 -8)" fill="#2e3436" stroke="none"><path d="M8 0.500a7.500 7.500 0 1 0 4.200 13.700l-.9-1.300A5.900 5.900 0 1 1 13.900 8v.8c0 .8-.5 1.300-1.100 1.300s-1.100-.5-1.100-1.300V4.800h-1.500v.6A3.400 3.400 0 1 0 10.700 10.500c.4.800 1.200 1.300 2.100 1.300 1.500 0 2.700-1.200 2.700-2.900V8A7.500 7.500 0 0 0 8 .5Zm0 5.600a1.900 1.900 0 1 1 0 3.800 1.900 1.900 0 0 1 0-3.800Z" fill-rule="evenodd"/></g><g transform="translate(14.85 295.00) scale(0.660) translate(-8 -8)" fill="#2e3436" stroke="none"><circle cx="2.900" cy="8" r="2.600"/><circle cx="12.700" cy="2.900" r="2.600"/><circle cx="12.700" cy="13.100" r="2.600"/><path d="M2.800 8 12.800 2.800M2.800 8 12.800 13.200" stroke="#2e3436" stroke-width="1.700" fill="none"/></g><g transform="translate(14.90 326.40) scale(0.660) translate(-8 -8)" fill="#2e3436" stroke="none"><path d="M2 5.800h2.300L7.600 2.800v10.400L4.300 10.200H2Z"/><path d="M9 5.300c1.300 1.500 1.300 3.900 0 5.400" stroke="#2e3436" stroke-width="1.500" fill="none"/><path d="M11 3.300c2.400 2.600 2.400 6.800 0 9.400" stroke="#2e3436" stroke-width="1.500" fill="none" opacity="0.650"/></g><g transform="translate(14.85 357.40) scale(0.700) translate(-8 -8)" fill="#2e3436" stroke="none"><path d="M3.200 0.800h3.600v1.400h1.700c.8 0 1.500.7 1.500 1.500V6H8.400V3.800H1.800v10h5V15.400H1.600C.8 15.400.200 14.700.200 13.900V3.700c0-.8.700-1.500 1.500-1.500h1.500Z"/><path d="M10.800 6.500v2h2.600v-2h1.300v2h1.100v1.500H14.700c0 2.100-1.300 3.400-3.300 3.500v1.900H9.900v-1.900C8 13.400 6.700 12.100 6.700 10H5.600V8.500h1.100v-2h1.300v2h1.500v-2Z" transform="rotate(-90 10.700 11) translate(0 0)"/></g><g transform="translate(14.60 388.70) scale(0.660) translate(-8 -8)" fill="#2e3436" stroke="none"><path d="M2 3A1.800 1.800 0 0 1 3.800 1.200h8.400A1.800 1.800 0 0 1 14 3v6.700a1.800 1.800 0 0 1-1.800 1.800H3.800A1.800 1.800 0 0 1 2 9.700ZM3.700 3v6.800h8.600V3Z" fill-rule="evenodd"/><rect x="4.300" y="13.200" width="7.400" height="1.500" rx="0.500"/></g><path d="M160.20 198.70l3.600 3.700-3.600 3.700" stroke="#2e3436" stroke-width="1.300" fill="none"/><path d="M160.20 229.80l3.600 3.700-3.600 3.700" stroke="#2e3436" stroke-width="1.300" fill="none"/></svg>
</div>
<div id="content"><div id="prevarea"></div>
<div style="position:absolute;left:144.1px;top:12.7px;width:180.7px;height:100.6px;overflow:hidden;box-shadow:0 0 0 2.5px rgba(255,255,255,0.55)"><svg style="display:block" width="180.7" height="100.6" viewBox="0 0 181 101" preserveAspectRatio="none"><defs><linearGradient id="ps" gradientUnits="userSpaceOnUse" x1="0" y1="0" x2="80" y2="30"><stop offset="0" stop-color="#F2AA7C"/><stop offset="1" stop-color="#EC9C7C"/></linearGradient><linearGradient id="pp" gradientUnits="userSpaceOnUse" x1="95" y1="5" x2="140" y2="75"><stop offset="0" stop-color="#DB7486"/><stop offset="1" stop-color="#EE8A7D"/></linearGradient><linearGradient id="pr" gradientUnits="userSpaceOnUse" x1="0" y1="30" x2="95" y2="95"><stop offset="0" stop-color="#F0A276"/><stop offset="0.2" stop-color="#F0A276"/><stop offset="0.5" stop-color="#F08A7C"/><stop offset="1" stop-color="#F08A7C"/></linearGradient></defs><rect width="181" height="101" fill="url(#pp)"/><path d="M106.0 -2.0C105.7 -0.7 105.0 2.3 104.0 6.0C103.0 9.7 101.5 15.0 100.0 20.0C98.5 25.0 96.5 30.7 95.0 36.0C93.5 41.3 92.0 47.0 91.0 52.0C90.0 57.0 89.5 61.3 89.0 66.0C88.5 70.7 88.2 77.7 88.0 80.0L0.0 80.0L0.0 -2.0Z" fill="#E38A89"/><path d="M100.0 -2.0C99.7 -0.7 99.2 2.3 98.0 6.0C96.8 9.7 94.8 15.0 93.0 20.0C91.2 25.0 88.7 30.7 87.0 36.0C85.3 41.3 83.8 47.0 83.0 52.0C82.2 57.0 81.8 61.3 82.0 66.0C82.2 70.7 83.7 77.7 84.0 80.0L0.0 80.0L0.0 -2.0Z" fill="#E7988D"/><path d="M94.0 -2.0C93.7 -0.7 93.5 2.3 92.0 6.0C90.5 9.7 87.3 15.0 85.0 20.0C82.7 25.0 79.8 30.7 78.0 36.0C76.2 41.3 74.5 47.0 74.0 52.0C73.5 57.0 74.0 61.3 75.0 66.0C76.0 70.7 79.2 77.7 80.0 80.0L0.0 80.0L0.0 -2.0Z" fill="#EBA793"/><path d="M89.0 -2.0C88.5 -0.7 88.0 2.5 86.0 6.0C84.0 9.5 80.0 14.5 77.0 19.0C74.0 23.5 70.2 28.3 68.0 33.0C65.8 37.7 64.2 42.3 64.0 47.0C63.8 51.7 65.0 55.8 67.0 61.0C69.0 66.2 74.5 75.2 76.0 78.0L0.0 80.0L0.0 -2.0Z" fill="#EEB69A"/><path d="M85.0 -2.0C84.5 -0.7 84.8 3.2 82.0 6.0C79.2 8.8 72.8 11.7 68.0 15.0C63.2 18.3 56.7 22.5 53.0 26.0C49.3 29.5 46.5 32.5 46.0 36.0C45.5 39.5 46.7 41.0 50.0 47.0C53.3 53.0 63.3 67.8 66.0 72.0L0.0 80.0L0.0 -2.0Z" fill="#F2C6A1"/><path d="M84.0 -2.0C83.1 -0.6 81.0 4.4 78.5 6.3C76.0 8.2 72.8 7.9 69.0 9.5C65.2 11.2 60.1 13.8 55.6 16.2C51.1 18.6 45.9 21.7 42.3 23.8C38.6 25.9 36.1 27.1 33.7 28.6C31.3 30.1 28.9 32.3 28.0 33.0L0.0 60.0L0.0 -2.0Z" fill="url(#ps)"/><path d="M164.0 -3.0C163.7 -2.5 162.9 -1.6 162.3 0.0C161.7 1.6 161.7 3.3 160.4 6.3C159.1 9.3 157.3 13.8 154.7 18.0C152.1 22.2 148.5 26.0 145.0 31.4C141.5 36.8 137.8 45.4 133.7 50.5C129.6 55.6 124.9 58.8 120.4 62.0C116.0 65.2 111.5 67.3 107.0 69.5C102.5 71.7 97.8 73.8 93.7 75.2C89.6 76.6 84.9 77.4 82.3 78.0C79.7 78.6 78.7 78.8 78.0 79.0L100.4 103.0L184.0 103.0L184.0 -3.0Z" fill="#82ABBF"/><path d="M168.5 -0.2C168.2 0.2 167.4 1.2 166.8 2.8C166.2 4.3 166.2 6.1 164.9 9.1C163.6 12.1 161.8 16.6 159.2 20.8C156.6 24.9 153.0 28.7 149.5 34.1C146.0 39.6 142.3 48.1 138.2 53.2C134.1 58.4 129.3 61.6 124.9 64.8C120.5 67.9 116.0 70.0 111.5 72.2C107.0 74.5 102.3 76.5 98.2 78.0C94.1 79.4 89.4 80.1 86.8 80.8C84.2 81.4 83.2 81.6 82.5 81.8L103.4 103.0L184.0 103.0L184.0 -3.0Z" fill="#75A6BB"/><path d="M173.0 2.5C172.7 3.0 171.9 4.0 171.3 5.5C170.7 7.0 170.7 8.8 169.4 11.8C168.1 14.8 166.3 19.3 163.7 23.5C161.1 27.7 157.5 31.5 154.0 36.9C150.5 42.3 146.8 50.9 142.7 56.0C138.6 61.1 133.8 64.3 129.4 67.5C125.0 70.7 120.5 72.8 116.0 75.0C111.5 77.2 106.8 79.3 102.7 80.7C98.6 82.1 93.9 82.9 91.3 83.5C88.7 84.1 87.7 84.3 87.0 84.5L106.4 103.0L184.0 103.0L184.0 -3.0Z" fill="#689FB6"/><path d="M177.9 5.5C177.7 6.0 176.8 7.0 176.2 8.5C175.7 10.1 175.6 11.8 174.3 14.8C173.1 17.8 171.2 22.3 168.6 26.5C166.1 30.7 162.4 34.5 158.9 39.9C155.4 45.3 151.7 53.9 147.6 59.0C143.5 64.1 138.8 67.4 134.3 70.5C129.9 73.7 125.4 75.8 121.0 78.0C116.5 80.2 111.8 82.3 107.7 83.7C103.5 85.1 98.9 85.9 96.2 86.5C93.6 87.2 92.7 87.4 92.0 87.5L109.7 103.0L184.0 103.0L184.0 -3.0Z" fill="#5B99B1"/><path d="M183.3 8.8C183.1 9.3 182.2 10.3 181.7 11.8C181.1 13.4 181.0 15.1 179.8 18.1C178.5 21.1 176.6 25.6 174.0 29.8C171.5 34.0 167.8 37.8 164.3 43.2C160.8 48.6 157.1 57.2 153.0 62.3C148.9 67.4 144.2 70.7 139.8 73.8C135.3 77.0 130.8 79.1 126.3 81.3C121.9 83.5 117.2 85.6 113.1 87.0C108.9 88.4 104.3 89.2 101.7 89.8C99.0 90.5 98.1 90.7 97.3 90.8L113.3 103.0L184.0 103.0L184.0 -3.0Z" fill="#4E92AC"/><path d="M189.2 12.4C188.9 12.9 188.1 13.9 187.5 15.4C186.9 17.0 186.9 18.7 185.6 21.7C184.3 24.7 182.5 29.2 179.9 33.4C177.3 37.6 173.7 41.4 170.2 46.8C166.7 52.2 163.0 60.8 158.9 65.9C154.8 71.0 150.0 74.2 145.6 77.4C141.2 80.6 136.6 82.7 132.2 84.9C127.7 87.1 123.0 89.2 118.9 90.6C114.8 92.0 110.1 92.8 107.5 93.4C104.9 94.0 103.9 94.2 103.2 94.4L117.2 103.0L184.0 103.0L184.0 -3.0Z" fill="#4189A5"/><path d="M104.0 103.0C106.3 102.4 112.4 100.7 118.0 99.5C123.6 98.3 131.4 98.5 137.5 96.0C143.6 93.5 149.6 88.9 154.7 84.8C159.8 80.7 163.7 76.2 168.0 71.4C172.3 66.6 177.7 59.4 180.4 56.0C183.1 52.6 183.4 51.8 184.0 51.0L184.0 103.0Z" fill="#4FAEC6"/><path d="M128.0 103.0C131.0 102.0 140.7 99.5 146.0 97.0C151.3 94.5 155.7 91.5 160.0 88.0C164.3 84.5 168.0 80.3 172.0 76.0C176.0 71.7 182.0 64.3 184.0 62.0L184.0 103.0Z" fill="#6BBCCE"/><path d="M148.0 103.0C150.3 101.8 157.7 98.8 162.0 96.0C166.3 93.2 170.3 89.5 174.0 86.0C177.7 82.5 182.3 76.8 184.0 75.0L184.0 103.0Z" fill="#90CEDA"/><path d="M164.0 103.0C165.7 102.0 170.7 99.5 174.0 97.0C177.3 94.5 182.3 89.5 184.0 88.0L184.0 103.0Z" fill="#B8E2E8"/><path d="M-3.0 16.5C-2.5 16.6 -3.1 16.1 0.0 17.0C3.1 17.9 10.0 20.1 15.6 22.0C21.2 23.9 28.0 25.1 33.7 28.6C39.4 32.1 45.1 38.4 50.0 43.0C54.9 47.6 58.9 51.6 63.0 56.0C67.1 60.4 71.2 65.7 74.7 69.5C78.2 73.3 81.3 75.6 84.2 79.0C87.1 82.4 89.3 86.3 92.0 90.0C94.7 93.7 98.7 98.7 100.4 101.0C102.1 103.3 101.7 103.5 102.0 104.0L-3.0 104.0Z" fill="#F2AC78"/><path d="M-3.0 19.5C-2.5 19.6 -3.1 19.1 0.0 20.0C3.1 20.9 10.2 22.8 15.6 24.6C21.0 26.4 27.0 27.6 32.5 31.0C38.0 34.4 43.7 40.6 48.5 45.0C53.3 49.4 57.3 53.2 61.5 57.5C65.7 61.8 69.9 66.8 73.5 70.5C77.1 74.2 80.3 76.6 83.2 80.0C86.1 83.4 88.3 87.5 91.0 91.0C93.7 94.5 97.5 98.8 99.2 101.0C100.9 103.2 100.7 103.5 101.0 104.0L-3.0 104.0Z" fill="url(#pr)"/><path d="M-3.0 40.0C-2.5 40.0 -3.1 39.7 0.0 40.0C3.1 40.3 10.4 41.0 15.6 42.0C20.8 43.0 25.2 43.3 30.9 45.7C36.6 48.1 43.6 51.6 50.0 56.2C56.4 60.8 63.6 68.2 69.0 73.3C74.4 78.4 77.9 82.1 82.3 86.7C86.7 91.3 93.0 98.1 95.6 101.0C98.2 103.9 97.6 103.5 98.0 104.0L-3.0 104.0Z" fill="#8FA8AE"/><path d="M-3.0 45.5C-2.5 45.5 -3.1 45.2 0.0 45.7C3.1 46.2 10.4 47.2 15.6 48.6C20.8 50.0 25.2 51.1 30.9 54.3C36.6 57.5 44.3 62.8 50.0 67.6C55.7 72.4 60.1 77.3 65.0 82.9C69.9 88.5 76.6 97.5 79.4 101.0C82.2 104.5 81.6 103.5 82.0 104.0L-3.0 104.0Z" fill="#5FA6BA"/><path d="M-3.0 47.7C-2.5 47.7 -3.2 47.4 -0.1 47.9C2.9 48.3 10.2 49.2 15.2 50.6C20.3 52.0 24.6 53.0 30.2 56.1C35.8 59.2 43.4 64.4 48.9 69.1C54.5 73.7 58.7 78.6 63.5 84.0C68.2 89.4 74.7 98.2 77.4 101.6C80.1 104.9 79.2 103.6 79.5 104.0L-3.0 104.0Z" fill="#489CB7"/><path d="M-3.0 52.0C-2.5 52.0 -3.2 51.6 -0.2 52.1C2.8 52.5 10.0 53.3 15.0 54.6C20.0 55.8 24.2 56.7 29.8 59.6C35.3 62.5 42.8 67.6 48.3 72.0C53.7 76.4 57.9 81.0 62.6 86.1C67.2 91.2 73.7 99.7 76.2 102.7C78.8 105.7 77.7 103.8 78.0 104.0L-3.0 104.0Z" fill="#3F8DA8"/><path d="M-3.0 56.5C-2.5 56.5 -3.2 56.1 -0.3 56.5C2.7 56.8 9.9 57.6 14.8 58.7C19.8 59.8 24.0 60.6 29.5 63.3C35.0 66.0 42.4 70.8 47.8 75.0C53.3 79.2 57.4 83.5 62.0 88.3C66.6 93.1 72.9 101.3 75.4 103.9C77.9 106.5 76.7 104.0 77.0 104.0L-3.0 104.0Z" fill="#3A839E"/><path d="M-3.0 73.0C-2.5 73.0 -3.5 72.3 0.0 73.0C3.5 73.7 12.0 75.0 18.0 77.0C24.0 79.0 30.3 82.0 36.0 85.0C41.7 88.0 47.7 92.3 52.0 95.0C56.3 97.7 59.8 99.5 62.0 101.0C64.2 102.5 64.5 103.5 65.0 104.0L-3.0 104.0Z" fill="#4290AB"/><path d="M-3.0 84.0C-2.5 84.0 -2.8 83.5 0.0 84.0C2.8 84.5 9.3 85.5 14.0 87.0C18.7 88.5 23.7 90.7 28.0 93.0C32.3 95.3 37.5 99.2 40.0 101.0C42.5 102.8 42.5 103.5 43.0 104.0L-3.0 104.0Z" fill="#4A9EB8"/><path d="M-3.0 95.0C-2.5 95.0 -1.5 94.7 0.0 95.0C1.5 95.3 4.0 96.0 6.0 97.0C8.0 98.0 10.7 99.8 12.0 101.0C13.3 102.2 13.7 103.5 14.0 104.0L-3.0 104.0Z" fill="#A8D8E2"/><rect width="181" height="6.100" fill="#000"/><text x="2.500" y="4.800" font-family="Liberation Sans, sans-serif" font-weight="bold" font-size="4" fill="#fff">Activities</text><text x="86.500" y="4.800" font-family="Liberation Sans, sans-serif" font-weight="bold" font-size="4" fill="#fff">17:27</text><path d="M162 2.200h3.400l-1.700 2.600Z" fill="#fff"/><path d="M167.500 2.700h1l1.200-1v3.400l-1.200-1h-1Z" fill="#fff"/><circle cx="176" cy="3.300" r="1.300" fill="none" stroke="#fff" stroke-width="0.600"/><circle cx="9.43" cy="87.80" r="0.99" fill="#F0503C"/><circle cx="11.40" cy="88.03" r="0.99" fill="#F8B820"/><circle cx="11.52" cy="89.94" r="0.99" fill="#86C83C"/><circle cx="10.01" cy="90.41" r="0.99" fill="#4AB0E8"/><circle cx="8.85" cy="89.48" r="0.99" fill="#1D62C8"/><text x="13.20" y="90.35" font-family="Liberation Sans, sans-serif" font-weight="bold" font-size="3.92" fill="#fff" textLength="15.66" lengthAdjust="spacingAndGlyphs">AlmaLinux</text></svg></div>
<div class="thumb" style="left:14.0px;top:136.0px"><svg viewBox="0 0 101.5 75.5" preserveAspectRatio="none"><svg x="0" y="0" width="101.5" height="75.5" viewBox="0 5 138 96" preserveAspectRatio="none"><defs><linearGradient id="as" gradientUnits="userSpaceOnUse" x1="0" y1="0" x2="80" y2="30"><stop offset="0" stop-color="#F2AA7C"/><stop offset="1" stop-color="#EC9C7C"/></linearGradient><linearGradient id="ap" gradientUnits="userSpaceOnUse" x1="95" y1="5" x2="140" y2="75"><stop offset="0" stop-color="#DB7486"/><stop offset="1" stop-color="#EE8A7D"/></linearGradient><linearGradient id="ar" gradientUnits="userSpaceOnUse" x1="0" y1="30" x2="95" y2="95"><stop offset="0" stop-color="#F0A276"/><stop offset="0.2" stop-color="#F0A276"/><stop offset="0.5" stop-color="#F08A7C"/><stop offset="1" stop-color="#F08A7C"/></linearGradient></defs><rect width="181" height="101" fill="url(#ap)"/><path d="M106.0 -2.0C105.7 -0.7 105.0 2.3 104.0 6.0C103.0 9.7 101.5 15.0 100.0 20.0C98.5 25.0 96.5 30.7 95.0 36.0C93.5 41.3 92.0 47.0 91.0 52.0C90.0 57.0 89.5 61.3 89.0 66.0C88.5 70.7 88.2 77.7 88.0 80.0L0.0 80.0L0.0 -2.0Z" fill="#E38A89"/><path d="M100.0 -2.0C99.7 -0.7 99.2 2.3 98.0 6.0C96.8 9.7 94.8 15.0 93.0 20.0C91.2 25.0 88.7 30.7 87.0 36.0C85.3 41.3 83.8 47.0 83.0 52.0C82.2 57.0 81.8 61.3 82.0 66.0C82.2 70.7 83.7 77.7 84.0 80.0L0.0 80.0L0.0 -2.0Z" fill="#E7988D"/><path d="M94.0 -2.0C93.7 -0.7 93.5 2.3 92.0 6.0C90.5 9.7 87.3 15.0 85.0 20.0C82.7 25.0 79.8 30.7 78.0 36.0C76.2 41.3 74.5 47.0 74.0 52.0C73.5 57.0 74.0 61.3 75.0 66.0C76.0 70.7 79.2 77.7 80.0 80.0L0.0 80.0L0.0 -2.0Z" fill="#EBA793"/><path d="M89.0 -2.0C88.5 -0.7 88.0 2.5 86.0 6.0C84.0 9.5 80.0 14.5 77.0 19.0C74.0 23.5 70.2 28.3 68.0 33.0C65.8 37.7 64.2 42.3 64.0 47.0C63.8 51.7 65.0 55.8 67.0 61.0C69.0 66.2 74.5 75.2 76.0 78.0L0.0 80.0L0.0 -2.0Z" fill="#EEB69A"/><path d="M85.0 -2.0C84.5 -0.7 84.8 3.2 82.0 6.0C79.2 8.8 72.8 11.7 68.0 15.0C63.2 18.3 56.7 22.5 53.0 26.0C49.3 29.5 46.5 32.5 46.0 36.0C45.5 39.5 46.7 41.0 50.0 47.0C53.3 53.0 63.3 67.8 66.0 72.0L0.0 80.0L0.0 -2.0Z" fill="#F2C6A1"/><path d="M84.0 -2.0C83.1 -0.6 81.0 4.4 78.5 6.3C76.0 8.2 72.8 7.9 69.0 9.5C65.2 11.2 60.1 13.8 55.6 16.2C51.1 18.6 45.9 21.7 42.3 23.8C38.6 25.9 36.1 27.1 33.7 28.6C31.3 30.1 28.9 32.3 28.0 33.0L0.0 60.0L0.0 -2.0Z" fill="url(#as)"/><path d="M164.0 -3.0C163.7 -2.5 162.9 -1.6 162.3 0.0C161.7 1.6 161.7 3.3 160.4 6.3C159.1 9.3 157.3 13.8 154.7 18.0C152.1 22.2 148.5 26.0 145.0 31.4C141.5 36.8 137.8 45.4 133.7 50.5C129.6 55.6 124.9 58.8 120.4 62.0C116.0 65.2 111.5 67.3 107.0 69.5C102.5 71.7 97.8 73.8 93.7 75.2C89.6 76.6 84.9 77.4 82.3 78.0C79.7 78.6 78.7 78.8 78.0 79.0L100.4 103.0L184.0 103.0L184.0 -3.0Z" fill="#82ABBF"/><path d="M168.5 -0.2C168.2 0.2 167.4 1.2 166.8 2.8C166.2 4.3 166.2 6.1 164.9 9.1C163.6 12.1 161.8 16.6 159.2 20.8C156.6 24.9 153.0 28.7 149.5 34.1C146.0 39.6 142.3 48.1 138.2 53.2C134.1 58.4 129.3 61.6 124.9 64.8C120.5 67.9 116.0 70.0 111.5 72.2C107.0 74.5 102.3 76.5 98.2 78.0C94.1 79.4 89.4 80.1 86.8 80.8C84.2 81.4 83.2 81.6 82.5 81.8L103.4 103.0L184.0 103.0L184.0 -3.0Z" fill="#75A6BB"/><path d="M173.0 2.5C172.7 3.0 171.9 4.0 171.3 5.5C170.7 7.0 170.7 8.8 169.4 11.8C168.1 14.8 166.3 19.3 163.7 23.5C161.1 27.7 157.5 31.5 154.0 36.9C150.5 42.3 146.8 50.9 142.7 56.0C138.6 61.1 133.8 64.3 129.4 67.5C125.0 70.7 120.5 72.8 116.0 75.0C111.5 77.2 106.8 79.3 102.7 80.7C98.6 82.1 93.9 82.9 91.3 83.5C88.7 84.1 87.7 84.3 87.0 84.5L106.4 103.0L184.0 103.0L184.0 -3.0Z" fill="#689FB6"/><path d="M177.9 5.5C177.7 6.0 176.8 7.0 176.2 8.5C175.7 10.1 175.6 11.8 174.3 14.8C173.1 17.8 171.2 22.3 168.6 26.5C166.1 30.7 162.4 34.5 158.9 39.9C155.4 45.3 151.7 53.9 147.6 59.0C143.5 64.1 138.8 67.4 134.3 70.5C129.9 73.7 125.4 75.8 121.0 78.0C116.5 80.2 111.8 82.3 107.7 83.7C103.5 85.1 98.9 85.9 96.2 86.5C93.6 87.2 92.7 87.4 92.0 87.5L109.7 103.0L184.0 103.0L184.0 -3.0Z" fill="#5B99B1"/><path d="M183.3 8.8C183.1 9.3 182.2 10.3 181.7 11.8C181.1 13.4 181.0 15.1 179.8 18.1C178.5 21.1 176.6 25.6 174.0 29.8C171.5 34.0 167.8 37.8 164.3 43.2C160.8 48.6 157.1 57.2 153.0 62.3C148.9 67.4 144.2 70.7 139.8 73.8C135.3 77.0 130.8 79.1 126.3 81.3C121.9 83.5 117.2 85.6 113.1 87.0C108.9 88.4 104.3 89.2 101.7 89.8C99.0 90.5 98.1 90.7 97.3 90.8L113.3 103.0L184.0 103.0L184.0 -3.0Z" fill="#4E92AC"/><path d="M189.2 12.4C188.9 12.9 188.1 13.9 187.5 15.4C186.9 17.0 186.9 18.7 185.6 21.7C184.3 24.7 182.5 29.2 179.9 33.4C177.3 37.6 173.7 41.4 170.2 46.8C166.7 52.2 163.0 60.8 158.9 65.9C154.8 71.0 150.0 74.2 145.6 77.4C141.2 80.6 136.6 82.7 132.2 84.9C127.7 87.1 123.0 89.2 118.9 90.6C114.8 92.0 110.1 92.8 107.5 93.4C104.9 94.0 103.9 94.2 103.2 94.4L117.2 103.0L184.0 103.0L184.0 -3.0Z" fill="#4189A5"/><path d="M104.0 103.0C106.3 102.4 112.4 100.7 118.0 99.5C123.6 98.3 131.4 98.5 137.5 96.0C143.6 93.5 149.6 88.9 154.7 84.8C159.8 80.7 163.7 76.2 168.0 71.4C172.3 66.6 177.7 59.4 180.4 56.0C183.1 52.6 183.4 51.8 184.0 51.0L184.0 103.0Z" fill="#4FAEC6"/><path d="M128.0 103.0C131.0 102.0 140.7 99.5 146.0 97.0C151.3 94.5 155.7 91.5 160.0 88.0C164.3 84.5 168.0 80.3 172.0 76.0C176.0 71.7 182.0 64.3 184.0 62.0L184.0 103.0Z" fill="#6BBCCE"/><path d="M148.0 103.0C150.3 101.8 157.7 98.8 162.0 96.0C166.3 93.2 170.3 89.5 174.0 86.0C177.7 82.5 182.3 76.8 184.0 75.0L184.0 103.0Z" fill="#90CEDA"/><path d="M164.0 103.0C165.7 102.0 170.7 99.5 174.0 97.0C177.3 94.5 182.3 89.5 184.0 88.0L184.0 103.0Z" fill="#B8E2E8"/><path d="M-3.0 16.5C-2.5 16.6 -3.1 16.1 0.0 17.0C3.1 17.9 10.0 20.1 15.6 22.0C21.2 23.9 28.0 25.1 33.7 28.6C39.4 32.1 45.1 38.4 50.0 43.0C54.9 47.6 58.9 51.6 63.0 56.0C67.1 60.4 71.2 65.7 74.7 69.5C78.2 73.3 81.3 75.6 84.2 79.0C87.1 82.4 89.3 86.3 92.0 90.0C94.7 93.7 98.7 98.7 100.4 101.0C102.1 103.3 101.7 103.5 102.0 104.0L-3.0 104.0Z" fill="#F2AC78"/><path d="M-3.0 19.5C-2.5 19.6 -3.1 19.1 0.0 20.0C3.1 20.9 10.2 22.8 15.6 24.6C21.0 26.4 27.0 27.6 32.5 31.0C38.0 34.4 43.7 40.6 48.5 45.0C53.3 49.4 57.3 53.2 61.5 57.5C65.7 61.8 69.9 66.8 73.5 70.5C77.1 74.2 80.3 76.6 83.2 80.0C86.1 83.4 88.3 87.5 91.0 91.0C93.7 94.5 97.5 98.8 99.2 101.0C100.9 103.2 100.7 103.5 101.0 104.0L-3.0 104.0Z" fill="url(#ar)"/><path d="M-3.0 40.0C-2.5 40.0 -3.1 39.7 0.0 40.0C3.1 40.3 10.4 41.0 15.6 42.0C20.8 43.0 25.2 43.3 30.9 45.7C36.6 48.1 43.6 51.6 50.0 56.2C56.4 60.8 63.6 68.2 69.0 73.3C74.4 78.4 77.9 82.1 82.3 86.7C86.7 91.3 93.0 98.1 95.6 101.0C98.2 103.9 97.6 103.5 98.0 104.0L-3.0 104.0Z" fill="#8FA8AE"/><path d="M-3.0 45.5C-2.5 45.5 -3.1 45.2 0.0 45.7C3.1 46.2 10.4 47.2 15.6 48.6C20.8 50.0 25.2 51.1 30.9 54.3C36.6 57.5 44.3 62.8 50.0 67.6C55.7 72.4 60.1 77.3 65.0 82.9C69.9 88.5 76.6 97.5 79.4 101.0C82.2 104.5 81.6 103.5 82.0 104.0L-3.0 104.0Z" fill="#5FA6BA"/><path d="M-3.0 47.7C-2.5 47.7 -3.2 47.4 -0.1 47.9C2.9 48.3 10.2 49.2 15.2 50.6C20.3 52.0 24.6 53.0 30.2 56.1C35.8 59.2 43.4 64.4 48.9 69.1C54.5 73.7 58.7 78.6 63.5 84.0C68.2 89.4 74.7 98.2 77.4 101.6C80.1 104.9 79.2 103.6 79.5 104.0L-3.0 104.0Z" fill="#489CB7"/><path d="M-3.0 52.0C-2.5 52.0 -3.2 51.6 -0.2 52.1C2.8 52.5 10.0 53.3 15.0 54.6C20.0 55.8 24.2 56.7 29.8 59.6C35.3 62.5 42.8 67.6 48.3 72.0C53.7 76.4 57.9 81.0 62.6 86.1C67.2 91.2 73.7 99.7 76.2 102.7C78.8 105.7 77.7 103.8 78.0 104.0L-3.0 104.0Z" fill="#3F8DA8"/><path d="M-3.0 56.5C-2.5 56.5 -3.2 56.1 -0.3 56.5C2.7 56.8 9.9 57.6 14.8 58.7C19.8 59.8 24.0 60.6 29.5 63.3C35.0 66.0 42.4 70.8 47.8 75.0C53.3 79.2 57.4 83.5 62.0 88.3C66.6 93.1 72.9 101.3 75.4 103.9C77.9 106.5 76.7 104.0 77.0 104.0L-3.0 104.0Z" fill="#3A839E"/><path d="M-3.0 73.0C-2.5 73.0 -3.5 72.3 0.0 73.0C3.5 73.7 12.0 75.0 18.0 77.0C24.0 79.0 30.3 82.0 36.0 85.0C41.7 88.0 47.7 92.3 52.0 95.0C56.3 97.7 59.8 99.5 62.0 101.0C64.2 102.5 64.5 103.5 65.0 104.0L-3.0 104.0Z" fill="#4290AB"/><path d="M-3.0 84.0C-2.5 84.0 -2.8 83.5 0.0 84.0C2.8 84.5 9.3 85.5 14.0 87.0C18.7 88.5 23.7 90.7 28.0 93.0C32.3 95.3 37.5 99.2 40.0 101.0C42.5 102.8 42.5 103.5 43.0 104.0L-3.0 104.0Z" fill="#4A9EB8"/><path d="M-3.0 95.0C-2.5 95.0 -1.5 94.7 0.0 95.0C1.5 95.3 4.0 96.0 6.0 97.0C8.0 98.0 10.7 99.8 12.0 101.0C13.3 102.2 13.7 103.5 14.0 104.0L-3.0 104.0Z" fill="#A8D8E2"/></svg><circle cx="6.34" cy="66.06" r="0.75" fill="#F0503C"/><circle cx="7.84" cy="66.24" r="0.75" fill="#F8B820"/><circle cx="7.92" cy="67.69" r="0.75" fill="#86C83C"/><circle cx="6.78" cy="68.04" r="0.75" fill="#4AB0E8"/><circle cx="5.90" cy="67.34" r="0.75" fill="#1D62C8"/><text x="9.20" y="68.00" font-family="Liberation Sans, sans-serif" font-weight="bold" font-size="2.97" fill="#fff" textLength="11.88" lengthAdjust="spacingAndGlyphs">AlmaLinux</text></svg></div><div class="thumb" style="left:127.0px;top:136.0px"><svg viewBox="0 0 101.5 75.5" preserveAspectRatio="none"><svg x="0" y="0" width="101.5" height="75.5" viewBox="0 5 138 96" preserveAspectRatio="none"><defs><linearGradient id="bs" gradientUnits="userSpaceOnUse" x1="0" y1="0" x2="80" y2="30"><stop offset="0" stop-color="#4E8FB0"/><stop offset="1" stop-color="#417FA2"/></linearGradient><linearGradient id="bp" gradientUnits="userSpaceOnUse" x1="95" y1="5" x2="140" y2="75"><stop offset="0" stop-color="#B8667E"/><stop offset="1" stop-color="#4A5878"/></linearGradient><linearGradient id="br" gradientUnits="userSpaceOnUse" x1="0" y1="30" x2="95" y2="95"><stop offset="0" stop-color="#6F8296"/><stop offset="0.2" stop-color="#6F8296"/><stop offset="0.5" stop-color="#38576F"/><stop offset="1" stop-color="#38576F"/></linearGradient></defs><rect width="181" height="101" fill="url(#bp)"/><path d="M106.0 -2.0C105.7 -0.7 105.0 2.3 104.0 6.0C103.0 9.7 101.5 15.0 100.0 20.0C98.5 25.0 96.5 30.7 95.0 36.0C93.5 41.3 92.0 47.0 91.0 52.0C90.0 57.0 89.5 61.3 89.0 66.0C88.5 70.7 88.2 77.7 88.0 80.0L0.0 80.0L0.0 -2.0Z" fill="#B86A80"/><path d="M100.0 -2.0C99.7 -0.7 99.2 2.3 98.0 6.0C96.8 9.7 94.8 15.0 93.0 20.0C91.2 25.0 88.7 30.7 87.0 36.0C85.3 41.3 83.8 47.0 83.0 52.0C82.2 57.0 81.8 61.3 82.0 66.0C82.2 70.7 83.7 77.7 84.0 80.0L0.0 80.0L0.0 -2.0Z" fill="#C87C84"/><path d="M94.0 -2.0C93.7 -0.7 93.5 2.3 92.0 6.0C90.5 9.7 87.3 15.0 85.0 20.0C82.7 25.0 79.8 30.7 78.0 36.0C76.2 41.3 74.5 47.0 74.0 52.0C73.5 57.0 74.0 61.3 75.0 66.0C76.0 70.7 79.2 77.7 80.0 80.0L0.0 80.0L0.0 -2.0Z" fill="#D8928B"/><path d="M89.0 -2.0C88.5 -0.7 88.0 2.5 86.0 6.0C84.0 9.5 80.0 14.5 77.0 19.0C74.0 23.5 70.2 28.3 68.0 33.0C65.8 37.7 64.2 42.3 64.0 47.0C63.8 51.7 65.0 55.8 67.0 61.0C69.0 66.2 74.5 75.2 76.0 78.0L0.0 80.0L0.0 -2.0Z" fill="#E8B094"/><path d="M85.0 -2.0C84.5 -0.7 84.8 3.2 82.0 6.0C79.2 8.8 72.8 11.7 68.0 15.0C63.2 18.3 56.7 22.5 53.0 26.0C49.3 29.5 46.5 32.5 46.0 36.0C45.5 39.5 46.7 41.0 50.0 47.0C53.3 53.0 63.3 67.8 66.0 72.0L0.0 80.0L0.0 -2.0Z" fill="#F2CDA2"/><path d="M84.0 -2.0C83.1 -0.6 81.0 4.4 78.5 6.3C76.0 8.2 72.8 7.9 69.0 9.5C65.2 11.2 60.1 13.8 55.6 16.2C51.1 18.6 45.9 21.7 42.3 23.8C38.6 25.9 36.1 27.1 33.7 28.6C31.3 30.1 28.9 32.3 28.0 33.0L0.0 60.0L0.0 -2.0Z" fill="url(#bs)"/><path d="M164.0 -3.0C163.7 -2.5 162.9 -1.6 162.3 0.0C161.7 1.6 161.7 3.3 160.4 6.3C159.1 9.3 157.3 13.8 154.7 18.0C152.1 22.2 148.5 26.0 145.0 31.4C141.5 36.8 137.8 45.4 133.7 50.5C129.6 55.6 124.9 58.8 120.4 62.0C116.0 65.2 111.5 67.3 107.0 69.5C102.5 71.7 97.8 73.8 93.7 75.2C89.6 76.6 84.9 77.4 82.3 78.0C79.7 78.6 78.7 78.8 78.0 79.0L100.4 103.0L184.0 103.0L184.0 -3.0Z" fill="#3A5872"/><path d="M168.5 -0.2C168.2 0.2 167.4 1.2 166.8 2.8C166.2 4.3 166.2 6.1 164.9 9.1C163.6 12.1 161.8 16.6 159.2 20.8C156.6 24.9 153.0 28.7 149.5 34.1C146.0 39.6 142.3 48.1 138.2 53.2C134.1 58.4 129.3 61.6 124.9 64.8C120.5 67.9 116.0 70.0 111.5 72.2C107.0 74.5 102.3 76.5 98.2 78.0C94.1 79.4 89.4 80.1 86.8 80.8C84.2 81.4 83.2 81.6 82.5 81.8L103.4 103.0L184.0 103.0L184.0 -3.0Z" fill="#36546E"/><path d="M173.0 2.5C172.7 3.0 171.9 4.0 171.3 5.5C170.7 7.0 170.7 8.8 169.4 11.8C168.1 14.8 166.3 19.3 163.7 23.5C161.1 27.7 157.5 31.5 154.0 36.9C150.5 42.3 146.8 50.9 142.7 56.0C138.6 61.1 133.8 64.3 129.4 67.5C125.0 70.7 120.5 72.8 116.0 75.0C111.5 77.2 106.8 79.3 102.7 80.7C98.6 82.1 93.9 82.9 91.3 83.5C88.7 84.1 87.7 84.3 87.0 84.5L106.4 103.0L184.0 103.0L184.0 -3.0Z" fill="#33506B"/><path d="M177.9 5.5C177.7 6.0 176.8 7.0 176.2 8.5C175.7 10.1 175.6 11.8 174.3 14.8C173.1 17.8 171.2 22.3 168.6 26.5C166.1 30.7 162.4 34.5 158.9 39.9C155.4 45.3 151.7 53.9 147.6 59.0C143.5 64.1 138.8 67.4 134.3 70.5C129.9 73.7 125.4 75.8 121.0 78.0C116.5 80.2 111.8 82.3 107.7 83.7C103.5 85.1 98.9 85.9 96.2 86.5C93.6 87.2 92.7 87.4 92.0 87.5L109.7 103.0L184.0 103.0L184.0 -3.0Z" fill="#304D68"/><path d="M183.3 8.8C183.1 9.3 182.2 10.3 181.7 11.8C181.1 13.4 181.0 15.1 179.8 18.1C178.5 21.1 176.6 25.6 174.0 29.8C171.5 34.0 167.8 37.8 164.3 43.2C160.8 48.6 157.1 57.2 153.0 62.3C148.9 67.4 144.2 70.7 139.8 73.8C135.3 77.0 130.8 79.1 126.3 81.3C121.9 83.5 117.2 85.6 113.1 87.0C108.9 88.4 104.3 89.2 101.7 89.8C99.0 90.5 98.1 90.7 97.3 90.8L113.3 103.0L184.0 103.0L184.0 -3.0Z" fill="#2E4A65"/><path d="M189.2 12.4C188.9 12.9 188.1 13.9 187.5 15.4C186.9 17.0 186.9 18.7 185.6 21.7C184.3 24.7 182.5 29.2 179.9 33.4C177.3 37.6 173.7 41.4 170.2 46.8C166.7 52.2 163.0 60.8 158.9 65.9C154.8 71.0 150.0 74.2 145.6 77.4C141.2 80.6 136.6 82.7 132.2 84.9C127.7 87.1 123.0 89.2 118.9 90.6C114.8 92.0 110.1 92.8 107.5 93.4C104.9 94.0 103.9 94.2 103.2 94.4L117.2 103.0L184.0 103.0L184.0 -3.0Z" fill="#2C4762"/><path d="M104.0 103.0C106.3 102.4 112.4 100.7 118.0 99.5C123.6 98.3 131.4 98.5 137.5 96.0C143.6 93.5 149.6 88.9 154.7 84.8C159.8 80.7 163.7 76.2 168.0 71.4C172.3 66.6 177.7 59.4 180.4 56.0C183.1 52.6 183.4 51.8 184.0 51.0L184.0 103.0Z" fill="#3A5F7C"/><path d="M128.0 103.0C131.0 102.0 140.7 99.5 146.0 97.0C151.3 94.5 155.7 91.5 160.0 88.0C164.3 84.5 168.0 80.3 172.0 76.0C176.0 71.7 182.0 64.3 184.0 62.0L184.0 103.0Z" fill="#456C88"/><path d="M148.0 103.0C150.3 101.8 157.7 98.8 162.0 96.0C166.3 93.2 170.3 89.5 174.0 86.0C177.7 82.5 182.3 76.8 184.0 75.0L184.0 103.0Z" fill="#527A94"/><path d="M164.0 103.0C165.7 102.0 170.7 99.5 174.0 97.0C177.3 94.5 182.3 89.5 184.0 88.0L184.0 103.0Z" fill="#6088A0"/><path d="M-3.0 16.5C-2.5 16.6 -3.1 16.1 0.0 17.0C3.1 17.9 10.0 20.1 15.6 22.0C21.2 23.9 28.0 25.1 33.7 28.6C39.4 32.1 45.1 38.4 50.0 43.0C54.9 47.6 58.9 51.6 63.0 56.0C67.1 60.4 71.2 65.7 74.7 69.5C78.2 73.3 81.3 75.6 84.2 79.0C87.1 82.4 89.3 86.3 92.0 90.0C94.7 93.7 98.7 98.7 100.4 101.0C102.1 103.3 101.7 103.5 102.0 104.0L-3.0 104.0Z" fill="#CDBC9E"/><path d="M-3.0 19.5C-2.5 19.6 -3.1 19.1 0.0 20.0C3.1 20.9 10.2 22.8 15.6 24.6C21.0 26.4 27.0 27.6 32.5 31.0C38.0 34.4 43.7 40.6 48.5 45.0C53.3 49.4 57.3 53.2 61.5 57.5C65.7 61.8 69.9 66.8 73.5 70.5C77.1 74.2 80.3 76.6 83.2 80.0C86.1 83.4 88.3 87.5 91.0 91.0C93.7 94.5 97.5 98.8 99.2 101.0C100.9 103.2 100.7 103.5 101.0 104.0L-3.0 104.0Z" fill="url(#br)"/><path d="M-3.0 40.0C-2.5 40.0 -3.1 39.7 0.0 40.0C3.1 40.3 10.4 41.0 15.6 42.0C20.8 43.0 25.2 43.3 30.9 45.7C36.6 48.1 43.6 51.6 50.0 56.2C56.4 60.8 63.6 68.2 69.0 73.3C74.4 78.4 77.9 82.1 82.3 86.7C86.7 91.3 93.0 98.1 95.6 101.0C98.2 103.9 97.6 103.5 98.0 104.0L-3.0 104.0Z" fill="#33536F"/><path d="M-3.0 45.5C-2.5 45.5 -3.1 45.2 0.0 45.7C3.1 46.2 10.4 47.2 15.6 48.6C20.8 50.0 25.2 51.1 30.9 54.3C36.6 57.5 44.3 62.8 50.0 67.6C55.7 72.4 60.1 77.3 65.0 82.9C69.9 88.5 76.6 97.5 79.4 101.0C82.2 104.5 81.6 103.5 82.0 104.0L-3.0 104.0Z" fill="#32516D"/><path d="M-3.0 47.7C-2.5 47.7 -3.2 47.4 -0.1 47.9C2.9 48.3 10.2 49.2 15.2 50.6C20.3 52.0 24.6 53.0 30.2 56.1C35.8 59.2 43.4 64.4 48.9 69.1C54.5 73.7 58.7 78.6 63.5 84.0C68.2 89.4 74.7 98.2 77.4 101.6C80.1 104.9 79.2 103.6 79.5 104.0L-3.0 104.0Z" fill="#304E6A"/><path d="M-3.0 52.0C-2.5 52.0 -3.2 51.6 -0.2 52.1C2.8 52.5 10.0 53.3 15.0 54.6C20.0 55.8 24.2 56.7 29.8 59.6C35.3 62.5 42.8 67.6 48.3 72.0C53.7 76.4 57.9 81.0 62.6 86.1C67.2 91.2 73.7 99.7 76.2 102.7C78.8 105.7 77.7 103.8 78.0 104.0L-3.0 104.0Z" fill="#2E4B67"/><path d="M-3.0 56.5C-2.5 56.5 -3.2 56.1 -0.3 56.5C2.7 56.8 9.9 57.6 14.8 58.7C19.8 59.8 24.0 60.6 29.5 63.3C35.0 66.0 42.4 70.8 47.8 75.0C53.3 79.2 57.4 83.5 62.0 88.3C66.6 93.1 72.9 101.3 75.4 103.9C77.9 106.5 76.7 104.0 77.0 104.0L-3.0 104.0Z" fill="#2C4864"/><path d="M-3.0 73.0C-2.5 73.0 -3.5 72.3 0.0 73.0C3.5 73.7 12.0 75.0 18.0 77.0C24.0 79.0 30.3 82.0 36.0 85.0C41.7 88.0 47.7 92.3 52.0 95.0C56.3 97.7 59.8 99.5 62.0 101.0C64.2 102.5 64.5 103.5 65.0 104.0L-3.0 104.0Z" fill="#2E4B67"/><path d="M-3.0 84.0C-2.5 84.0 -2.8 83.5 0.0 84.0C2.8 84.5 9.3 85.5 14.0 87.0C18.7 88.5 23.7 90.7 28.0 93.0C32.3 95.3 37.5 99.2 40.0 101.0C42.5 102.8 42.5 103.5 43.0 104.0L-3.0 104.0Z" fill="#31506C"/><path d="M-3.0 95.0C-2.5 95.0 -1.5 94.7 0.0 95.0C1.5 95.3 4.0 96.0 6.0 97.0C8.0 98.0 10.7 99.8 12.0 101.0C13.3 102.2 13.7 103.5 14.0 104.0L-3.0 104.0Z" fill="#3A5A76"/></svg><circle cx="6.34" cy="66.06" r="0.75" fill="#F0503C"/><circle cx="7.84" cy="66.24" r="0.75" fill="#F8B820"/><circle cx="7.92" cy="67.69" r="0.75" fill="#86C83C"/><circle cx="6.78" cy="68.04" r="0.75" fill="#4AB0E8"/><circle cx="5.90" cy="67.34" r="0.75" fill="#1D62C8"/><text x="9.20" y="68.00" font-family="Liberation Sans, sans-serif" font-weight="bold" font-size="2.97" fill="#fff" textLength="11.88" lengthAdjust="spacingAndGlyphs">AlmaLinux</text></svg></div><div class="thumb" style="left:240.0px;top:136.0px"><svg viewBox="0 0 101.5 75.5" preserveAspectRatio="none"><defs><linearGradient id="c1" gradientUnits="userSpaceOnUse" x1="0" y1="0" x2="0" y2="75.5"><stop offset="0" stop-color="#EBD0A0"/><stop offset="0.5" stop-color="#E8CFA6"/></linearGradient><linearGradient id="c2" gradientUnits="userSpaceOnUse" x1="0" y1="20" x2="0" y2="60"><stop offset="0" stop-color="#4F95A8"/><stop offset="0.45" stop-color="#A8C5C0"/><stop offset="1" stop-color="#DDD8C8"/></linearGradient><linearGradient id="c3" gradientUnits="userSpaceOnUse" x1="0" y1="42" x2="0" y2="75"><stop offset="0" stop-color="#4E94A8"/><stop offset="0.35" stop-color="#7FB3C2"/><stop offset="1" stop-color="#B5D8E4"/></linearGradient><linearGradient id="c4" gradientUnits="userSpaceOnUse" x1="0" y1="0" x2="0" y2="36"><stop offset="0" stop-color="#F0E4DC"/><stop offset="0.35" stop-color="#E9C2C4"/><stop offset="0.7" stop-color="#D9949E"/><stop offset="1" stop-color="#CC7E8E"/></linearGradient></defs><rect width="101.5" height="75.5" fill="url(#c1)"/><path d="M30.0 27.0C32.5 24.8 40.3 17.7 45.0 14.0C49.7 10.3 54.5 7.3 58.0 5.0C61.5 2.7 64.7 0.8 66.0 0.0L103.0 0.0L103.0 45.0L60.0 40.0Z" fill="url(#c4)"/><path d="M62.0 44.0C64.2 42.8 70.7 38.8 75.0 37.0C79.3 35.2 83.3 33.8 88.0 33.0C92.7 32.2 100.5 32.2 103.0 32.0L103.0 60.0L70.0 55.0Z" fill="#F0E5B5"/><path d="M-2.0 17.0C0.0 17.8 5.5 20.2 10.0 22.0C14.5 23.8 20.0 26.5 25.0 28.0C30.0 29.5 35.0 30.0 40.0 31.0C45.0 32.0 50.3 32.7 55.0 34.0C59.7 35.3 63.8 37.0 68.0 39.0C72.2 41.0 74.2 42.5 80.0 46.0C85.8 49.5 99.2 57.7 103.0 60.0L103.0 77.0L-2.0 77.0Z" fill="url(#c2)"/><path d="M-2.0 56.0C0.8 55.0 8.8 52.2 15.0 50.0C21.2 47.8 28.3 44.5 35.0 43.0C41.7 41.5 49.2 41.0 55.0 41.0C60.8 41.0 65.0 41.5 70.0 43.0C75.0 44.5 79.5 47.2 85.0 50.0C90.5 52.8 100.0 58.3 103.0 60.0L103.0 77.0L-2.0 77.0Z" fill="url(#c3)"/><rect x="35" y="73.5" width="55" height="2" fill="#EDB5B8" opacity="0.9"/><circle cx="6.34" cy="66.06" r="0.75" fill="#F0503C"/><circle cx="7.84" cy="66.24" r="0.75" fill="#F8B820"/><circle cx="7.92" cy="67.69" r="0.75" fill="#86C83C"/><circle cx="6.78" cy="68.04" r="0.75" fill="#4AB0E8"/><circle cx="5.90" cy="67.34" r="0.75" fill="#1D62C8"/><text x="9.20" y="68.00" font-family="Liberation Sans, sans-serif" font-weight="bold" font-size="2.97" fill="#fff" textLength="11.88" lengthAdjust="spacingAndGlyphs">AlmaLinux</text></svg></div><div class="thumb" style="left:353.0px;top:136.0px"><svg viewBox="0 0 101.5 75.5" preserveAspectRatio="none"><defs><linearGradient id="d1" gradientUnits="userSpaceOnUse" x1="10" y1="0" x2="95" y2="40"><stop offset="0" stop-color="#C9B098"/><stop offset="0.5" stop-color="#9A8C8C"/><stop offset="1" stop-color="#5E5B72"/></linearGradient><linearGradient id="d2" gradientUnits="userSpaceOnUse" x1="0" y1="20" x2="60" y2="70"><stop offset="0" stop-color="#C2AE92"/><stop offset="0.5" stop-color="#8E8F84"/><stop offset="1" stop-color="#3F6A80"/></linearGradient><linearGradient id="d3" gradientUnits="userSpaceOnUse" x1="0" y1="30" x2="0" y2="75"><stop offset="0" stop-color="#3F7E95"/><stop offset="1" stop-color="#2F5F7A"/></linearGradient><linearGradient id="d4" gradientUnits="userSpaceOnUse" x1="0" y1="48" x2="0" y2="75"><stop offset="0" stop-color="#25406A"/><stop offset="0.5" stop-color="#243A62"/><stop offset="1" stop-color="#2C4E70"/></linearGradient></defs><rect width="101.5" height="75.5" fill="url(#d1)"/><path d="M-2.0 18.0C0.8 18.7 8.8 20.5 15.0 22.0C21.2 23.5 28.3 25.5 35.0 27.0C41.7 28.5 48.7 29.8 55.0 31.0C61.3 32.2 70.0 33.5 73.0 34.0L60.0 60.0L-2.0 77.0Z" fill="url(#d2)"/><path d="M40.0 55.0C42.0 53.3 47.8 48.0 52.0 45.0C56.2 42.0 60.3 39.2 65.0 37.0C69.7 34.8 73.7 33.3 80.0 32.0C86.3 30.7 99.2 29.5 103.0 29.0L103.0 77.0L30.0 77.0Z" fill="url(#d3)"/><path d="M-2.0 66.0C0.8 64.7 8.8 60.3 15.0 58.0C21.2 55.7 28.3 53.5 35.0 52.0C41.7 50.5 48.3 49.2 55.0 49.0C61.7 48.8 69.2 49.8 75.0 51.0C80.8 52.2 85.3 54.2 90.0 56.0C94.7 57.8 100.8 61.0 103.0 62.0L103.0 77.0L-2.0 77.0Z" fill="url(#d4)"/><circle cx="6.34" cy="66.06" r="0.75" fill="#F0503C"/><circle cx="7.84" cy="66.24" r="0.75" fill="#F8B820"/><circle cx="7.92" cy="67.69" r="0.75" fill="#86C83C"/><circle cx="6.78" cy="68.04" r="0.75" fill="#4AB0E8"/><circle cx="5.90" cy="67.34" r="0.75" fill="#1D62C8"/><text x="9.20" y="68.00" font-family="Liberation Sans, sans-serif" font-weight="bold" font-size="2.97" fill="#fff" textLength="11.88" lengthAdjust="spacingAndGlyphs">AlmaLinux</text></svg></div><div class="thumb" style="left:14.0px;top:223.5px"><svg viewBox="0 0 101.5 75.5" preserveAspectRatio="none"><defs><linearGradient id="e1" gradientUnits="userSpaceOnUse" x1="0" y1="0" x2="101" y2="45"><stop offset="0" stop-color="#D9687A"/><stop offset="0.45" stop-color="#9C566E"/><stop offset="1" stop-color="#5F4766"/></linearGradient><linearGradient id="e2" gradientUnits="userSpaceOnUse" x1="0" y1="22" x2="25" y2="75"><stop offset="0" stop-color="#A25C68"/><stop offset="0.45" stop-color="#6E4A62"/><stop offset="1" stop-color="#33466A"/></linearGradient><linearGradient id="e3" gradientUnits="userSpaceOnUse" x1="0" y1="30" x2="0" y2="75"><stop offset="0" stop-color="#5A4C78"/><stop offset="1" stop-color="#3F4570"/></linearGradient><linearGradient id="e4" gradientUnits="userSpaceOnUse" x1="0" y1="50" x2="0" y2="75"><stop offset="0" stop-color="#6A6088"/><stop offset="0.6" stop-color="#3F527A"/><stop offset="1" stop-color="#2B4468"/></linearGradient></defs><rect width="101.5" height="75.5" fill="url(#e1)"/><path d="M-2.0 22.0C0.8 22.7 8.8 24.8 15.0 26.0C21.2 27.2 28.3 28.0 35.0 29.0C41.7 30.0 48.8 31.0 55.0 32.0C61.2 33.0 69.2 34.5 72.0 35.0L60.0 60.0L-2.0 77.0Z" fill="url(#e2)"/><path d="M40.0 55.0C42.0 53.3 48.3 47.8 52.0 45.0C55.7 42.2 58.2 40.0 62.0 38.0C65.8 36.0 68.2 34.5 75.0 33.0C81.8 31.5 98.3 29.7 103.0 29.0L103.0 77.0L30.0 77.0Z" fill="url(#e3)"/><path d="M-2.0 66.0C0.8 64.7 8.8 60.3 15.0 58.0C21.2 55.7 28.3 53.3 35.0 52.0C41.7 50.7 48.3 50.0 55.0 50.0C61.7 50.0 69.2 50.8 75.0 52.0C80.8 53.2 85.3 55.2 90.0 57.0C94.7 58.8 100.8 62.0 103.0 63.0L103.0 77.0L-2.0 77.0Z" fill="url(#e4)"/><circle cx="6.34" cy="66.06" r="0.75" fill="#F0503C"/><circle cx="7.84" cy="66.24" r="0.75" fill="#F8B820"/><circle cx="7.92" cy="67.69" r="0.75" fill="#86C83C"/><circle cx="6.78" cy="68.04" r="0.75" fill="#4AB0E8"/><circle cx="5.90" cy="67.34" r="0.75" fill="#1D62C8"/><text x="9.20" y="68.00" font-family="Liberation Sans, sans-serif" font-weight="bold" font-size="2.97" fill="#fff" textLength="11.88" lengthAdjust="spacingAndGlyphs">AlmaLinux</text></svg></div><div class="thumb" style="left:127.0px;top:223.5px"><svg viewBox="0 0 101.5 75.5" preserveAspectRatio="none"><rect width="101.5" height="75.5" fill="#0E2A5E"/><path d="M1 47L10.5 33" stroke="#5AB4F4" stroke-width="2.8" stroke-linecap="round" opacity="1" fill="none"/><path d="M26 74L52 32" stroke="#5AB4F4" stroke-width="3.4" stroke-linecap="round" opacity="1" fill="none"/><path d="M49.7 18.6L58 1.7" stroke="#4A9CE8" stroke-width="0.7" stroke-linecap="round" opacity="1" fill="none"/><path d="M37 76L61 33" stroke="#E8B020" stroke-width="0.7" stroke-linecap="round" opacity="1" fill="none"/><path d="M70 76L101 2" stroke="#4A9CE8" stroke-width="0.7" stroke-linecap="round" opacity="1" fill="none"/><path d="M62 60L96 6" stroke="#4A9CE8" stroke-width="0.7" stroke-linecap="round" opacity="1" fill="none"/><path d="M43 76C46 66 52 60 55 54C58 46 62 42 66 38C70 33 73 28 77 23C79 25 76 31 73 36C70 42 69 47 66 52C63 58 61 64 59 68C57 72 55 74 54 76Z" fill="#F0503C"/><path d="M53 73L60.5 55" stroke="#5AB4F4" stroke-width="1.6" stroke-linecap="round" opacity="1" fill="none"/><path d="M64 50C66 44 70 40 73 34C77 27 82 20 86 13C89 8 92 3 95 -1L99 -1C97 4 93 10 90 16C86 23 82 29 79 35C76 41 72 45 70 50C68 54 65 54 64 50Z" fill="#F8C020"/><path d="M60 76C62 70 66 66 69 60C72 54 76 48 80 43C83 41 84 44 82 49C80 54 78 58 76 63C74 68 72 72 70 76Z" fill="#F8C020"/><path d="M63 9L68.5 1" stroke="#F8C020" stroke-width="3.6" stroke-linecap="round" opacity="1" fill="none"/><path d="M78 62C78 55 82 51 85 46C88 40 92 36 95 30C97 25 99 22 102 20L102 50C99 54 97 58 93 62C90 66 86 68 82 67C79 66 78 64 78 62Z" fill="#2F78E0"/><path d="M76 13L84 1" stroke="#5AB4F4" stroke-width="2.6" stroke-linecap="round" opacity="1" fill="none"/><path d="M92.5 60L100.5 46" stroke="#5AB4F4" stroke-width="2.4" stroke-linecap="round" opacity="1" fill="none"/><path d="M86 58L96 40" stroke="#7AB8F0" stroke-width="0.8" stroke-linecap="round" opacity="1" fill="none"/><circle cx="88.500" cy="65.200" r="2.400" fill="#F8C020"/><ellipse cx="81.500" cy="73" rx="4" ry="2.200" fill="#F8C020" transform="rotate(-15 81.5 73)"/><circle cx="75" cy="6" r="1.800" fill="#86D030"/><circle cx="60.300" cy="13" r="1.200" fill="#86D030"/><circle cx="3.800" cy="20" r="1.200" fill="#86D030"/><circle cx="5.200" cy="54" r="2.200" fill="#86D030"/><circle cx="10.900" cy="39.800" r="1" fill="#E8A020"/><circle cx="2.52" cy="70.69" r="0.54" fill="#F0503C"/><circle cx="3.61" cy="70.82" r="0.54" fill="#F8B820"/><circle cx="3.67" cy="71.88" r="0.54" fill="#86C83C"/><circle cx="2.84" cy="72.13" r="0.54" fill="#4AB0E8"/><circle cx="2.20" cy="71.62" r="0.54" fill="#1D62C8"/><text x="4.60" y="72.10" font-family="Liberation Sans, sans-serif" font-weight="bold" font-size="2.16" fill="#fff" textLength="8.64" lengthAdjust="spacingAndGlyphs">AlmaLinux</text></svg></div><div class="thumb" style="left:240.0px;top:223.5px"><svg viewBox="0 0 101.5 75.5" preserveAspectRatio="none"><rect width="101.5" height="75.5" fill="#F5F5F6"/><path d="M28 76C33 70 38 62 42 55C46 48 52 39 59 30C58 38 53 46 49 53C45 60 40 69 35 76Z" fill="#4AAEF4"/><path d="M36 76L79 0" stroke="#F07868" stroke-width="0.9" stroke-linecap="round" opacity="1" fill="none"/><path d="M46.6 76L73.4 28.5" stroke="#F07868" stroke-width="0.9" stroke-linecap="round" opacity="1" fill="none"/><path d="M73.4 28.5L79 18" stroke="#F4B0A8" stroke-width="0.8" stroke-linecap="round" opacity="1" fill="none"/><path d="M50.8 13L60 0" stroke="#F4B0A8" stroke-width="0.7" stroke-linecap="round" opacity="1" fill="none"/><path d="M51 76C56 70 61 64 65 57C67 51 69 47 73 44C77 41 79 36 82 32C85 28 89 27 92 23C95 19 98 14 102 11L102 40C99 44 96 48 93 53C90 58 86 62 83 66C80 70 77 73 74 76Z" fill="#2468D0"/><path d="M79 57C78 52 81 47 84 43C87 38 91 34 94 29C96 24 99 19 102 15L102 30C99 34 96 38 94 43C91 48 87 52 84 56C82 59 80 59 79 57Z" fill="#F8C030"/><path d="M66.4 73.7L73.4 61" stroke="#6AB8F4" stroke-width="1" stroke-linecap="round" opacity="1" fill="none"/><path d="M79 76L101 36" stroke="#F07868" stroke-width="1" stroke-linecap="round" opacity="1" fill="none"/><path d="M80 76C84 70 88 64 92 58C95 53 98 49 102 46L102 66C99 69 96 72 94 76Z" fill="#F8C030"/><path d="M97 76L101.5 64" stroke="#2468D0" stroke-width="4.5" stroke-linecap="round" opacity="1" fill="none"/><path d="M92 8L96 1" stroke="#4AAEF4" stroke-width="2.6" stroke-linecap="round" opacity="1" fill="none"/><path d="M0.8 61L5.2 53.5" stroke="#F8C030" stroke-width="2" stroke-linecap="round" opacity="1" fill="none"/><circle cx="70" cy="4.500" r="1.600" fill="#86D030"/><circle cx="67.800" cy="12.300" r="0.800" fill="#86D030"/><circle cx="77.700" cy="36.300" r="2" fill="#86D030"/><circle cx="78.400" cy="65.300" r="2.600" fill="#86D030"/><circle cx="5.40" cy="5.46" r="1.02" fill="#F0503C"/><circle cx="7.44" cy="5.70" r="1.02" fill="#F8B820"/><circle cx="7.56" cy="7.68" r="1.02" fill="#86C83C"/><circle cx="6.00" cy="8.16" r="1.02" fill="#4AB0E8"/><circle cx="4.80" cy="7.20" r="1.02" fill="#1D62C8"/><text x="9.30" y="8.10" font-family="Liberation Sans, sans-serif" font-weight="bold" font-size="4.05" fill="#1a2a5a" textLength="16.20" lengthAdjust="spacingAndGlyphs">AlmaLinux</text></svg></div><div class="thumb" style="left:353.0px;top:223.5px"><svg viewBox="0 0 101.5 75.5" preserveAspectRatio="none"><defs><linearGradient id="h1" gradientUnits="userSpaceOnUse" x1="0" y1="0" x2="101" y2="0"><stop offset="0" stop-color="#5E4A38"/><stop offset="0.25" stop-color="#8A7440"/><stop offset="0.45" stop-color="#C8BC58"/><stop offset="0.62" stop-color="#4A90B8"/><stop offset="1" stop-color="#2F78B8"/></linearGradient><linearGradient id="h2" gradientUnits="userSpaceOnUse" x1="0" y1="6" x2="0" y2="52"><stop offset="0" stop-color="#F2DC50"/><stop offset="0.35" stop-color="#F8BC30"/><stop offset="1" stop-color="#E88428"/></linearGradient><linearGradient id="h3" gradientUnits="userSpaceOnUse" x1="0" y1="12" x2="50" y2="62"><stop offset="0" stop-color="#E0602A"/><stop offset="0.4" stop-color="#CC3C30"/><stop offset="1" stop-color="#8E2C5C"/></linearGradient><linearGradient id="h4" gradientUnits="userSpaceOnUse" x1="0" y1="36" x2="0" y2="75"><stop offset="0" stop-color="#7A2C6C"/><stop offset="0.35" stop-color="#4E2874"/><stop offset="1" stop-color="#2A2058"/></linearGradient></defs><rect width="101.5" height="75.5" fill="url(#h1)"/><path d="M-2.0 13.0C0.3 12.5 7.0 11.0 12.0 10.0C17.0 9.0 22.5 7.8 28.0 7.0C33.5 6.2 39.7 5.3 45.0 5.5C50.3 5.7 55.0 6.8 60.0 8.0C65.0 9.2 70.0 11.5 75.0 13.0C80.0 14.5 85.3 16.0 90.0 17.0C94.7 18.0 100.8 18.7 103.0 19.0L103.0 77.0L-2.0 77.0Z" fill="url(#h2)"/><path d="M-2.0 12.0C0.3 12.0 7.0 11.3 12.0 12.0C17.0 12.7 23.0 14.3 28.0 16.0C33.0 17.7 37.0 19.3 42.0 22.0C47.0 24.7 52.7 28.7 58.0 32.0C63.3 35.3 68.7 39.0 74.0 42.0C79.3 45.0 85.2 48.0 90.0 50.0C94.8 52.0 100.8 53.3 103.0 54.0L103.0 77.0L-2.0 77.0Z" fill="url(#h3)"/><path d="M-2.0 36.0C0.0 35.7 5.5 34.0 10.0 34.0C14.5 34.0 20.0 34.8 25.0 36.0C30.0 37.2 35.0 39.2 40.0 41.0C45.0 42.8 49.2 44.7 55.0 47.0C60.8 49.3 67.0 52.7 75.0 55.0C83.0 57.3 98.3 60.0 103.0 61.0L103.0 77.0L-2.0 77.0Z" fill="url(#h4)"/><circle cx="6.34" cy="66.06" r="0.75" fill="#F0503C"/><circle cx="7.84" cy="66.24" r="0.75" fill="#F8B820"/><circle cx="7.92" cy="67.69" r="0.75" fill="#86C83C"/><circle cx="6.78" cy="68.04" r="0.75" fill="#4AB0E8"/><circle cx="5.90" cy="67.34" r="0.75" fill="#1D62C8"/><text x="9.20" y="68.00" font-family="Liberation Sans, sans-serif" font-weight="bold" font-size="2.97" fill="#fff" textLength="11.88" lengthAdjust="spacingAndGlyphs">AlmaLinux</text></svg></div><div class="thumb" style="left:14.0px;top:311.0px"><svg viewBox="0 0 101.5 75.5" preserveAspectRatio="none"><defs><linearGradient id="i1" gradientUnits="userSpaceOnUse" x1="0" y1="0" x2="30" y2="75"><stop offset="0" stop-color="#5F9DB8"/><stop offset="1" stop-color="#8FC0D0"/></linearGradient><linearGradient id="i2" gradientUnits="userSpaceOnUse" x1="0" y1="20" x2="30" y2="75"><stop offset="0" stop-color="#A5D5E0"/><stop offset="1" stop-color="#C5E5EA"/></linearGradient><linearGradient id="i3" gradientUnits="userSpaceOnUse" x1="0" y1="35" x2="40" y2="75"><stop offset="0" stop-color="#BFE0E6"/><stop offset="1" stop-color="#F0F2E4"/></linearGradient><linearGradient id="i4" gradientUnits="userSpaceOnUse" x1="30" y1="0" x2="90" y2="75"><stop offset="0" stop-color="#5A8FA8"/><stop offset="0.5" stop-color="#6FA8BE"/><stop offset="1" stop-color="#8FC8DA"/></linearGradient><linearGradient id="i5" gradientUnits="userSpaceOnUse" x1="30" y1="0" x2="100" y2="60"><stop offset="0" stop-color="#F06A7C"/><stop offset="0.5" stop-color="#D8687E"/><stop offset="1" stop-color="#A06888"/></linearGradient></defs><rect width="101.5" height="75.5" fill="url(#i1)"/><path d="M20.0 -2.0C21.0 -0.3 23.7 3.7 26.0 8.0C28.3 12.3 30.3 19.0 34.0 24.0C37.7 29.0 42.7 34.3 48.0 38.0C53.3 41.7 60.0 43.0 66.0 46.0C72.0 49.0 79.0 52.0 84.0 56.0C89.0 60.0 93.2 66.5 96.0 70.0C98.8 73.5 100.2 75.8 101.0 77.0L103.0 77.0L103.0 -2.0Z" fill="url(#i4)"/><path d="M27.0 -2.0C28.2 -0.3 31.2 4.3 34.0 8.0C36.8 11.7 40.0 16.3 44.0 20.0C48.0 23.7 53.0 27.0 58.0 30.0C63.0 33.0 69.0 34.7 74.0 38.0C79.0 41.3 84.0 46.0 88.0 50.0C92.0 54.0 95.5 59.3 98.0 62.0C100.5 64.7 102.2 65.3 103.0 66.0L103.0 -2.0Z" fill="#7A7A98"/><path d="M30.0 -2.0C31.3 -0.3 34.7 4.7 38.0 8.0C41.3 11.3 45.7 15.2 50.0 18.0C54.3 20.8 59.3 22.5 64.0 25.0C68.7 27.5 73.7 29.5 78.0 33.0C82.3 36.5 86.3 41.8 90.0 46.0C93.7 50.2 97.8 55.5 100.0 58.0C102.2 60.5 102.5 60.5 103.0 61.0L103.0 -2.0Z" fill="url(#i5)"/><path d="M66.0 -2.0C67.0 -0.7 69.7 2.3 72.0 6.0C74.3 9.7 77.3 15.3 80.0 20.0C82.7 24.7 85.3 29.3 88.0 34.0C90.7 38.7 93.5 44.0 96.0 48.0C98.5 52.0 101.8 56.3 103.0 58.0L103.0 -2.0Z" fill="#F07A7C"/><path d="M72.0 -2.0C73.3 -0.7 77.3 3.3 80.0 6.0C82.7 8.7 85.3 11.3 88.0 14.0C90.7 16.7 93.5 19.8 96.0 22.0C98.5 24.2 101.8 26.2 103.0 27.0L103.0 -2.0Z" fill="#F8A868"/><path d="M78.0 -2.0C79.3 -0.8 83.3 2.7 86.0 5.0C88.7 7.3 91.2 9.5 94.0 12.0C96.8 14.5 101.5 18.7 103.0 20.0L103.0 -2.0Z" fill="#F6C070"/><path d="M-2.0 20.0C-0.7 20.7 3.0 22.3 6.0 24.0C9.0 25.7 12.3 28.0 16.0 30.0C19.7 32.0 24.3 33.7 28.0 36.0C31.7 38.3 35.0 40.7 38.0 44.0C41.0 47.3 43.0 52.0 46.0 56.0C49.0 60.0 52.7 64.5 56.0 68.0C59.3 71.5 64.3 75.5 66.0 77.0L-2.0 77.0Z" fill="url(#i2)"/><path d="M-2.0 34.0C-0.3 34.3 4.3 35.0 8.0 36.0C11.7 37.0 16.0 38.3 20.0 40.0C24.0 41.7 28.3 43.3 32.0 46.0C35.7 48.7 39.0 52.3 42.0 56.0C45.0 59.7 48.0 64.5 50.0 68.0C52.0 71.5 53.3 75.5 54.0 77.0L-2.0 77.0Z" fill="url(#i3)"/><circle cx="6.72" cy="65.91" r="0.88" fill="#F0503C"/><circle cx="8.49" cy="66.12" r="0.88" fill="#F8B820"/><circle cx="8.59" cy="67.84" r="0.88" fill="#86C83C"/><circle cx="7.24" cy="68.25" r="0.88" fill="#4AB0E8"/><circle cx="6.20" cy="67.42" r="0.88" fill="#1D62C8"/><text x="10.10" y="68.20" font-family="Liberation Sans, sans-serif" font-weight="bold" font-size="3.51" fill="#1a2a5a" textLength="14.04" lengthAdjust="spacingAndGlyphs">AlmaLinux</text></svg></div>
</div>
</div>
</body></html>
